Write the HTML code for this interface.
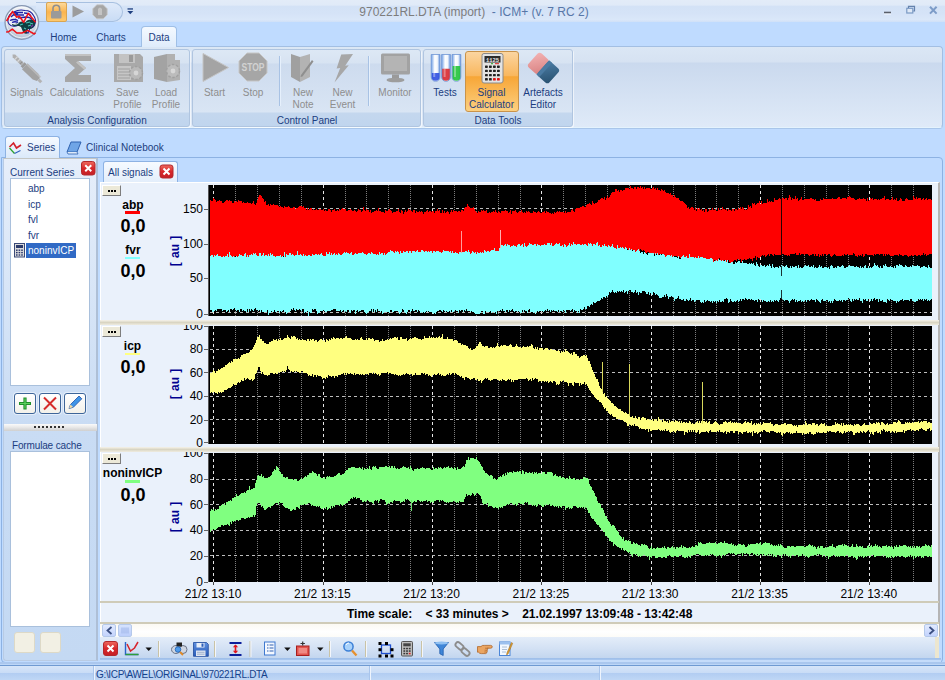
<!DOCTYPE html><html><head><meta charset="utf-8"><title>ICM+</title><style>
*{margin:0;padding:0;box-sizing:border-box}
html,body{width:945px;height:680px;overflow:hidden}
body{position:relative;background:#bfdbff;font-family:"Liberation Sans",sans-serif;font-size:11px;color:#000}
.abs{position:absolute}
.t{position:absolute;white-space:nowrap;line-height:1}
.c{transform:translateX(-50%);text-align:center}
.nav{color:#1b3d80}
.dis{color:#8e8e8e}
.ui{font-size:10px}
.grp{position:absolute;top:49px;height:78px;border:1px solid #b0c5e0;border-radius:3px;background:linear-gradient(#dde8f5 0,#d7e3f2 13px,#cddbee 14px,#d9e5f4 62px,#c4d7ee 63px,#c0d5ee 100%);box-shadow:1px 1px 0 rgba(255,255,255,.6)}
.lb{position:absolute;background:#fff;border:1px solid #a9c0dc}
.btn{position:absolute;border:1px solid #3d6599;border-radius:3px;background:linear-gradient(#ffffff,#f3f1ea);box-shadow:0 0 0 1px rgba(255,255,255,.5)}
.ax{font-size:12px;color:#000}
.sig{font-weight:bold;font-size:12px}
.val{font-weight:bold;font-size:18px}
.au{font-weight:bold;font-size:12px;word-spacing:0.9px;color:#000090;transform:translate(-50%,-50%) rotate(-90deg)}
</style></head><body>
<div class="abs" style="left:0;top:0;width:945px;height:22px;background:linear-gradient(#e3ecf8 0,#e0eaf8 24%,#d3e2f6 27%,#d5e3f7 60%,#dae7f9 90%,#cfe0f8 100%)"></div>
<div class="abs" style="left:0;top:22px;width:945px;height:25px;background:#bfdbff"></div>
<div class="t c " style="left:474px;top:6px;font-size:12px;color:#5877a8"><span style="color:#7d7d7d">970221RL.DTA (import)</span>&nbsp; - ICM+ (v. 7 RC 2)</div>
<div class="abs" style="left:36px;top:2px;width:87px;height:20px;border:1px solid #a7c0e0;border-left:none;border-radius:0 10px 10px 0;background:linear-gradient(#dfeafa,#c9dcf5)"></div>
<div class="abs" style="left:46px;top:2px;width:21px;height:20px;border:1px solid #dba54f;border-radius:2px;background:linear-gradient(#fdd99a,#fbb44e 50%,#fdc96e)"></div>
<div class="abs" style="left:141px;top:26px;width:36px;height:21px;border:1px solid #9fbfe6;border-bottom:none;border-radius:4px 4px 0 0;background:linear-gradient(#f4f9ff,#dfecfb)"></div>
<div class="t c nav ui" style="left:63.5px;top:32.5px;">Home</div>
<div class="t c nav ui" style="left:111px;top:32.5px;">Charts</div>
<div class="t c nav ui" style="left:159px;top:32.5px;">Data</div>
<div class="abs" style="left:1px;top:46px;width:942px;height:82px;border:1px solid #a3bfe3;border-bottom-color:#e4f3fd;border-radius:4px;background:linear-gradient(#dbe7f5 0,#d6e2f2 15px,#cad9ee 16px,#dfeaf8 100%);box-shadow:0 1px 0 #a9c6ea"></div>
<div class="abs" style="left:142px;top:46px;width:34px;height:1px;background:#dfecfb"></div>
<div class="grp" style="left:4px;width:186px"></div>
<div class="grp" style="left:192px;width:229px"></div>
<div class="grp" style="left:423px;width:150px"></div>
<div class="t c dis ui" style="left:26.5px;top:88px;">Signals</div>
<div class="t c dis ui" style="left:77px;top:88px;">Calculations</div>
<div class="t c dis ui" style="left:127.5px;top:88px;">Save</div>
<div class="t c dis ui" style="left:127.5px;top:100px;">Profile</div>
<div class="t c dis ui" style="left:166px;top:88px;">Load</div>
<div class="t c dis ui" style="left:166px;top:100px;">Profile</div>
<div class="t c dis ui" style="left:214.5px;top:88px;">Start</div>
<div class="t c dis ui" style="left:253px;top:88px;">Stop</div>
<div class="t c dis ui" style="left:303px;top:88px;">New</div>
<div class="t c dis ui" style="left:303px;top:100px;">Note</div>
<div class="t c dis ui" style="left:342.5px;top:88px;">New</div>
<div class="t c dis ui" style="left:342.5px;top:100px;">Event</div>
<div class="t c dis ui" style="left:395px;top:88px;">Monitor</div>
<div class="abs" style="left:465px;top:51px;width:54px;height:61px;border:1px solid #c9934a;border-radius:3px;background:linear-gradient(#fbd5a0 0,#f9b75e 40%,#f7a637 42%,#fcd080 100%)"></div>
<div class="t c nav ui" style="left:445px;top:88px;">Tests</div>
<div class="t c nav ui" style="left:491.5px;top:88px;">Signal</div>
<div class="t c nav ui" style="left:491.5px;top:100px;">Calculator</div>
<div class="t c nav ui" style="left:543px;top:88px;">Artefacts</div>
<div class="t c nav ui" style="left:543px;top:100px;">Editor</div>
<div class="t c nav ui" style="left:97px;top:116px;">Analysis Configuration</div>
<div class="t c nav ui" style="left:307px;top:116px;">Control Panel</div>
<div class="t c nav ui" style="left:498px;top:116px;">Data Tools</div>
<div class="abs" style="left:279px;top:56px;width:1px;height:50px;background:#a8c2e4"></div><div class="abs" style="left:280px;top:56px;width:1px;height:50px;background:#e6f0fc"></div>
<div class="abs" style="left:368px;top:56px;width:1px;height:50px;background:#a8c2e4"></div><div class="abs" style="left:369px;top:56px;width:1px;height:50px;background:#e6f0fc"></div>
<div class="abs" style="left:5px;top:136px;width:55px;height:22px;border:1px solid #8db2e3;border-bottom:none;border-radius:3px 3px 0 0;background:linear-gradient(#f6faff,#dbe9fa)"></div>
<div class="t nav ui" style="left:27px;top:143px;">Series</div>
<div class="t nav ui" style="left:86px;top:143px;">Clinical Notebook</div>
<div class="abs" style="left:1px;top:157px;width:942px;height:506px;border:1px solid #8db2e3;border-radius:0 4px 4px 4px;background:#bfdbff"></div>
<div class="abs" style="left:6px;top:157px;width:53px;height:1px;background:#dbe9fa"></div>
<div class="abs" style="left:3px;top:158px;width:95px;height:503px;border-radius:0 0 0 3px;border:1px solid #b9cbe3;border-top-color:#c4c6c4;border-right:2px solid #aebfd6;background:linear-gradient(#e6eefa 0,#c9dcf4 53%,#c4d9f3 100%)"></div>
<div class="t nav ui" style="left:10px;top:167.5px;">Current Series</div>
<div class="lb" style="left:10px;top:178px;width:80px;height:208px"></div>
<div class="t nav ui" style="left:28px;top:184px;">abp</div>
<div class="t nav ui" style="left:28px;top:200px;">icp</div>
<div class="t nav ui" style="left:28px;top:215px;">fvl</div>
<div class="t nav ui" style="left:28px;top:231px;">fvr</div>
<div class="abs" style="left:26px;top:243px;width:50px;height:15px;background:#316ac5"></div>
<div class="t ui" style="left:28px;top:246px;color:#fff">noninvICP</div>
<div class="btn" style="left:14px;top:393px;width:22px;height:21px"></div>
<div class="btn" style="left:39px;top:393px;width:22px;height:21px"></div>
<div class="btn" style="left:64px;top:393px;width:22px;height:21px"></div>
<div class="abs" style="left:4px;top:424px;width:93px;height:7px;background:linear-gradient(#fafafa,#e9e9e9 45%,#cfcfcf 100%)"></div>
<div class="abs" style="left:34px;top:426px;width:32px;height:2px;background:repeating-linear-gradient(90deg,#333 0,#333 2px,transparent 2px,transparent 4px)"></div>
<div class="t nav ui" style="left:12px;top:441px;letter-spacing:-0.15px">Formulae cache</div>
<div class="lb" style="left:10px;top:451px;width:80px;height:176px"></div>
<div class="abs" style="left:14px;top:632px;width:21px;height:21px;border:1px solid #ddd9c7;border-radius:3px;background:#f2f0e4"></div>
<div class="abs" style="left:40px;top:632px;width:21px;height:21px;border:1px solid #ddd9c7;border-radius:3px;background:#f2f0e4"></div>
<div class="abs" style="left:103px;top:161px;width:75px;height:21px;border:1px solid #8db2e3;border-bottom:none;border-radius:3px 3px 0 0;background:linear-gradient(#f6faff,#e3eefb)"></div>
<div class="t nav ui" style="left:108px;top:168px;">All signals</div>
<div class="abs" style="left:100px;top:182px;width:840px;height:455px;background:#eaf1fb;border:1px solid #fff;border-right:2px solid #b5b5b5"></div>
<div class="abs" style="left:100px;top:320px;width:839px;height:5px;background:linear-gradient(#f6f3ea,#d9d5c3 50%,#efece0)"></div>
<div class="abs" style="left:100px;top:447px;width:839px;height:5px;background:linear-gradient(#f6f3ea,#d9d5c3 50%,#efece0)"></div>
<div class="abs" style="left:100px;top:601px;width:839px;height:2px;background:#cfcbb8"></div>
<div class="abs" style="left:100px;top:622px;width:839px;height:2px;background:#cfcbb8"></div>
<div class="abs" style="left:100px;top:624px;width:839px;height:13px;background:linear-gradient(#fbf9f3,#ffffff 60%,#fdfcf8)"></div>
<div class="abs" style="left:100px;top:637px;width:840px;height:24px;background:#bfdbff"></div><div class="abs" style="left:100px;top:637px;width:835px;height:21px;background:linear-gradient(#e4edf9,#d3e1f4 55%,#c3d6ef)"></div><div class="abs" style="left:935px;top:637px;width:4px;height:21px;background:#ece6cf"></div>
<div class="abs" style="left:102px;top:185px;width:19px;height:11px;background:#ece9d8;border:1px solid #fff;border-right-color:#7d7d7d;border-bottom-color:#7d7d7d"></div>
<div class="abs" style="left:108px;top:190px;width:8px;height:2px;background:repeating-linear-gradient(90deg,#000 0,#000 2px,transparent 2px,transparent 3px)"></div>
<div class="abs" style="left:102px;top:326px;width:19px;height:11px;background:#ece9d8;border:1px solid #fff;border-right-color:#7d7d7d;border-bottom-color:#7d7d7d"></div>
<div class="abs" style="left:108px;top:331px;width:8px;height:2px;background:repeating-linear-gradient(90deg,#000 0,#000 2px,transparent 2px,transparent 3px)"></div>
<div class="abs" style="left:102px;top:453px;width:19px;height:11px;background:#ece9d8;border:1px solid #fff;border-right-color:#7d7d7d;border-bottom-color:#7d7d7d"></div>
<div class="abs" style="left:108px;top:458px;width:8px;height:2px;background:repeating-linear-gradient(90deg,#000 0,#000 2px,transparent 2px,transparent 3px)"></div>
<div class="t c sig" style="left:133px;top:198.8px;">abp</div>
<div class="abs" style="left:124.5px;top:211.3px;width:15.5px;height:2.5px;background:#f00"></div>
<div class="t c val" style="left:133px;top:216.7px;">0,0</div>
<div class="t c sig" style="left:133px;top:243.8px;">fvr</div>
<div class="abs" style="left:124.5px;top:256.8px;width:15.5px;height:2.5px;background:#80ffff"></div>
<div class="t c val" style="left:133px;top:261.6px;">0,0</div>
<div class="t c sig" style="left:132.5px;top:340.4px;">icp</div>
<div class="abs" style="left:124.5px;top:352.8px;width:15.5px;height:2.5px;background:#ffff80"></div>
<div class="t c val" style="left:133px;top:358px;">0,0</div>
<div class="t c " style="left:132.5px;top:466.7px;font-weight:bold;font-size:12px">noninvICP</div>
<div class="abs" style="left:124.5px;top:480px;width:15.5px;height:2.5px;background:#80ff80"></div>
<div class="t c val" style="left:133px;top:486px;">0,0</div>
<div class="t au" style="left:174.5px;top:250.5px">[ au ]</div>
<div class="t au" style="left:174.5px;top:384px">[ au ]</div>
<div class="t au" style="left:174.5px;top:517px">[ au ]</div>
<div class="t ax" style="right:742px;top:203px">150</div><div class="abs" style="left:204px;top:209px;width:4px;height:1px;background:#666"></div>
<div class="t ax" style="right:742px;top:237.5px">100</div><div class="abs" style="left:204px;top:244px;width:4px;height:1px;background:#666"></div>
<div class="t ax" style="right:742px;top:272px">50</div><div class="abs" style="left:204px;top:278px;width:4px;height:1px;background:#666"></div>
<div class="t ax" style="right:742px;top:307.5px">0</div><div class="abs" style="left:204px;top:314px;width:4px;height:1px;background:#666"></div>
<div class="abs" style="left:150px;top:325px;width:58px;height:12px;overflow:hidden"><div class="t ax" style="right:5px;top:-5.5px">100</div></div><div class="abs" style="left:204px;top:326px;width:4px;height:1px;background:#666"></div>
<div class="t ax" style="right:742px;top:343px">80</div><div class="abs" style="left:204px;top:349px;width:4px;height:1px;background:#666"></div>
<div class="t ax" style="right:742px;top:366.5px">60</div><div class="abs" style="left:204px;top:372px;width:4px;height:1px;background:#666"></div>
<div class="t ax" style="right:742px;top:390px">40</div><div class="abs" style="left:204px;top:396px;width:4px;height:1px;background:#666"></div>
<div class="t ax" style="right:742px;top:414px">20</div><div class="abs" style="left:204px;top:420px;width:4px;height:1px;background:#666"></div>
<div class="t ax" style="right:742px;top:436.5px">0</div><div class="abs" style="left:204px;top:442px;width:4px;height:1px;background:#666"></div>
<div class="abs" style="left:150px;top:452px;width:58px;height:12px;overflow:hidden"><div class="t ax" style="right:5px;top:-5px">100</div></div><div class="abs" style="left:204px;top:453px;width:4px;height:1px;background:#666"></div>
<div class="t ax" style="right:742px;top:473px">80</div><div class="abs" style="left:204px;top:479px;width:4px;height:1px;background:#666"></div>
<div class="t ax" style="right:742px;top:498.5px">60</div><div class="abs" style="left:204px;top:504px;width:4px;height:1px;background:#666"></div>
<div class="t ax" style="right:742px;top:524px">40</div><div class="abs" style="left:204px;top:530px;width:4px;height:1px;background:#666"></div>
<div class="t ax" style="right:742px;top:549.5px">20</div><div class="abs" style="left:204px;top:556px;width:4px;height:1px;background:#666"></div>
<div class="t ax" style="right:742px;top:575.5px">0</div><div class="abs" style="left:204px;top:582px;width:4px;height:1px;background:#666"></div>
<div class="t c ax" style="left:213.0px;top:588px;">21/2 13:10</div>
<div class="abs" style="left:213px;top:582px;width:1px;height:3px;background:#444"></div>
<div class="t c ax" style="left:322.3px;top:588px;">21/2 13:15</div>
<div class="abs" style="left:323px;top:582px;width:1px;height:3px;background:#444"></div>
<div class="t c ax" style="left:431.6px;top:588px;">21/2 13:20</div>
<div class="abs" style="left:432px;top:582px;width:1px;height:3px;background:#444"></div>
<div class="t c ax" style="left:540.9px;top:588px;">21/2 13:25</div>
<div class="abs" style="left:541px;top:582px;width:1px;height:3px;background:#444"></div>
<div class="t c ax" style="left:650.2px;top:588px;">21/2 13:30</div>
<div class="abs" style="left:651px;top:582px;width:1px;height:3px;background:#444"></div>
<div class="t c ax" style="left:759.5px;top:588px;">21/2 13:35</div>
<div class="abs" style="left:760px;top:582px;width:1px;height:3px;background:#444"></div>
<div class="t c ax" style="left:868.8px;top:588px;">21/2 13:40</div>
<div class="abs" style="left:869px;top:582px;width:1px;height:3px;background:#444"></div>
<div class="t " style="left:347px;top:607.5px;font-weight:bold;font-size:12px">Time scale:&nbsp;&nbsp;&nbsp; &lt; 33 minutes &gt;&nbsp;&nbsp;&nbsp; 21.02.1997 13:09:48 - 13:42:48</div>
<div class="abs" style="left:102px;top:624px;width:14px;height:13px;border:1px solid #b5c9ea;border-radius:2px;background:linear-gradient(#e1eafe,#c3d3fd)"></div>
<div class="abs" style="left:118px;top:624px;width:14px;height:13px;border:1px solid #b5c9ea;border-radius:2px;background:linear-gradient(#d6e3fe,#bccefb)"></div>
<div class="abs" style="left:924px;top:624px;width:14px;height:13px;border:1px solid #b5c9ea;border-radius:2px;background:linear-gradient(#e1eafe,#c3d3fd)"></div>
<div class="abs" style="left:100px;top:658px;width:841px;height:2px;background:linear-gradient(#9dbde8,#a9c8f0)"></div>
<div class="abs" style="left:100px;top:660px;width:841px;height:2px;background:#c5dcfa"></div>
<div class="abs" style="left:0;top:662px;width:945px;height:2px;background:#aac7ee"></div>
<div class="abs" style="left:0;top:664px;width:945px;height:1px;background:#bcd6f7"></div>
<div class="abs" style="left:0;top:665px;width:945px;height:1px;background:#6f9ad2"></div>
<div class="abs" style="left:0;top:666px;width:945px;height:14px;background:linear-gradient(#d6e5f9 0,#c9dcf6 48%,#b2cdf2 52%,#bfd7f5 100%)"></div>
<div class="t ui" style="left:96px;top:670px;color:#15428b;font-size:10px;letter-spacing:-0.33px">G:\ICP\AWEL\ORIGINAL\970221RL.DTA</div>
<div class="abs" style="left:94px;top:666px;width:1px;height:14px;background:#eef4fd"></div><div class="abs" style="left:93px;top:666px;width:1px;height:14px;background:#a9c5ec"></div>
<div class="abs" style="left:370px;top:666px;width:1px;height:14px;background:#eef4fd"></div><div class="abs" style="left:369px;top:666px;width:1px;height:14px;background:#a9c5ec"></div>
<div class="abs" style="left:600px;top:666px;width:1px;height:14px;background:#eef4fd"></div><div class="abs" style="left:599px;top:666px;width:1px;height:14px;background:#a9c5ec"></div>
<svg class="abs" style="left:0;top:0" width="945" height="680" viewBox="0 0 945 680" shape-rendering="crispEdges">
<rect x="208" y="185" width="724" height="131" fill="#000"/>
<path d="M213.5,185V316" stroke="#e6e6e6" stroke-width="1" stroke-dasharray="3,3"/>
<path d="M235.5,185V316" stroke="#7c7c7c" stroke-width="1" stroke-dasharray="1,1"/>
<path d="M257.5,185V316" stroke="#7c7c7c" stroke-width="1" stroke-dasharray="1,1"/>
<path d="M279.5,185V316" stroke="#7c7c7c" stroke-width="1" stroke-dasharray="1,1"/>
<path d="M301.5,185V316" stroke="#7c7c7c" stroke-width="1" stroke-dasharray="1,1"/>
<path d="M323.5,185V316" stroke="#e6e6e6" stroke-width="1" stroke-dasharray="3,3"/>
<path d="M345.5,185V316" stroke="#7c7c7c" stroke-width="1" stroke-dasharray="1,1"/>
<path d="M366.5,185V316" stroke="#7c7c7c" stroke-width="1" stroke-dasharray="1,1"/>
<path d="M388.5,185V316" stroke="#7c7c7c" stroke-width="1" stroke-dasharray="1,1"/>
<path d="M410.5,185V316" stroke="#7c7c7c" stroke-width="1" stroke-dasharray="1,1"/>
<path d="M432.5,185V316" stroke="#e6e6e6" stroke-width="1" stroke-dasharray="3,3"/>
<path d="M454.5,185V316" stroke="#7c7c7c" stroke-width="1" stroke-dasharray="1,1"/>
<path d="M476.5,185V316" stroke="#7c7c7c" stroke-width="1" stroke-dasharray="1,1"/>
<path d="M498.5,185V316" stroke="#7c7c7c" stroke-width="1" stroke-dasharray="1,1"/>
<path d="M520.5,185V316" stroke="#7c7c7c" stroke-width="1" stroke-dasharray="1,1"/>
<path d="M541.5,185V316" stroke="#e6e6e6" stroke-width="1" stroke-dasharray="3,3"/>
<path d="M563.5,185V316" stroke="#7c7c7c" stroke-width="1" stroke-dasharray="1,1"/>
<path d="M585.5,185V316" stroke="#7c7c7c" stroke-width="1" stroke-dasharray="1,1"/>
<path d="M607.5,185V316" stroke="#7c7c7c" stroke-width="1" stroke-dasharray="1,1"/>
<path d="M629.5,185V316" stroke="#7c7c7c" stroke-width="1" stroke-dasharray="1,1"/>
<path d="M651.5,185V316" stroke="#e6e6e6" stroke-width="1" stroke-dasharray="3,3"/>
<path d="M673.5,185V316" stroke="#7c7c7c" stroke-width="1" stroke-dasharray="1,1"/>
<path d="M695.5,185V316" stroke="#7c7c7c" stroke-width="1" stroke-dasharray="1,1"/>
<path d="M716.5,185V316" stroke="#7c7c7c" stroke-width="1" stroke-dasharray="1,1"/>
<path d="M738.5,185V316" stroke="#7c7c7c" stroke-width="1" stroke-dasharray="1,1"/>
<path d="M760.5,185V316" stroke="#e6e6e6" stroke-width="1" stroke-dasharray="3,3"/>
<path d="M782.5,185V316" stroke="#7c7c7c" stroke-width="1" stroke-dasharray="1,1"/>
<path d="M804.5,185V316" stroke="#7c7c7c" stroke-width="1" stroke-dasharray="1,1"/>
<path d="M826.5,185V316" stroke="#7c7c7c" stroke-width="1" stroke-dasharray="1,1"/>
<path d="M848.5,185V316" stroke="#7c7c7c" stroke-width="1" stroke-dasharray="1,1"/>
<path d="M869.5,185V316" stroke="#e6e6e6" stroke-width="1" stroke-dasharray="3,3"/>
<path d="M891.5,185V316" stroke="#7c7c7c" stroke-width="1" stroke-dasharray="1,1"/>
<path d="M913.5,185V316" stroke="#7c7c7c" stroke-width="1" stroke-dasharray="1,1"/>
<path d="M210,208.5H932" stroke="#bdbdbd" stroke-width="1" stroke-dasharray="3,3"/>
<path d="M210,243.5H932" stroke="#bdbdbd" stroke-width="1" stroke-dasharray="3,3"/>
<path d="M210,278.5H932" stroke="#bdbdbd" stroke-width="1" stroke-dasharray="3,3"/>
<path d="M210,312.5H932" stroke="#bdbdbd" stroke-width="1" stroke-dasharray="3,3"/>
<path d="M210,200H211V201H212V201H213V198H214V199H215V200H216V202H217V201H218V201H219V200H220V201H221V201H222V203H223V203H224V202H225V201H226V200H227V200H228V201H229V200H230V201H231V201H232V203H233V203H234V201H235V202H236V201H237V202H238V200H239V201H240V201H241V201H242V203H243V202H244V203H245V203H246V203H247V202H248V203H249V203H250V203H251V204H252V203H253V201H254V204H255V205H256V203H257V200H258V197H259V195H260V195H261V196H262V198H263V199H264V202H265V201H266V205H267V205H268V204H269V206H270V204H271V205H272V205H273V204H274V205H275V205H276V205H277V205H278V206H279V207H280V206H281V207H282V207H283V208H284V206H285V207H286V207H287V207H288V206H289V207H290V208H291V208H292V208H293V207H294V207H295V209H296V208H297V208H298V207H299V206H300V206H301V206H302V207H303V206H304V208H305V208H306V210H307V208H308V210H309V209H310V208H311V208H312V210H313V209H314V210H315V210H316V209H317V210H318V210H319V209H320V209H321V210H322V210H323V209H324V211H325V210H326V211H327V211H328V209H329V209H330V210H331V212H332V210H333V210H334V209H335V211H336V211H337V210H338V211H339V209H340V210H341V209H342V208H343V209H344V209H345V209H346V211H347V211H348V210H349V210H350V209H351V210H352V211H353V211H354V210H355V211H356V212H357V211H358V209H359V210H360V210H361V212H362V211H363V207H364V210H365V211H366V209H367V210H368V210H369V212H370V210H371V213H372V212H373V212H374V211H375V211H376V210H377V211H378V208H379V211H380V211H381V212H382V212H383V212H384V213H385V210H386V211H387V211H388V210H389V209H390V210H391V211H392V213H393V212H394V212H395V212H396V211H397V211H398V209H399V212H400V213H401V210H402V211H403V214H404V212H405V210H406V212H407V211H408V209H409V210H410V210H411V211H412V212H413V210H414V210H415V213H416V211H417V212H418V212H419V211H420V212H421V211H422V212H423V214H424V212H425V212H426V211H427V210H428V212H429V211H430V211H431V212H432V211H433V211H434V213H435V211H436V211H437V209H438V211H439V210H440V213H441V213H442V210H443V213H444V211H445V213H446V212H447V211H448V212H449V214H450V212H451V210H452V212H453V210H454V211H455V211H456V211H457V212H458V211H459V211H460V212H461V210H462V210H463V211H464V208H465V207H466V207H467V204H468V206H469V207H470V208H471V208H472V208H473V207H474V209H475V211H476V212H477V213H478V211H479V212H480V212H481V210H482V211H483V210H484V211H485V211H486V210H487V213H488V213H489V212H490V213H491V212H492V212H493V211H494V212H495V210H496V212H497V213H498V211H499V212H500V213H501V211H502V211H503V211H504V211H505V210H506V211H507V211H508V213H509V212H510V210H511V214H512V211H513V211H514V211H515V210H516V212H517V213H518V212H519V211H520V212H521V210H522V212H523V213H524V212H525V213H526V211H527V212H528V211H529V212H530V213H531V213H532V213H533V211H534V212H535V212H536V213H537V212H538V211H539V212H540V213H541V213H542V212H543V212H544V211H545V213H546V211H547V212H548V212H549V213H550V213H551V214H552V213H553V214H554V212H555V213H556V212H557V211H558V212H559V211H560V212H561V212H562V212H563V212H564V213H565V211H566V213H567V212H568V212H569V212H570V212H571V210H572V209H573V211H574V212H575V209H576V208H577V208H578V208H579V208H580V207H581V207H582V206H583V206H584V207H585V207H586V205H587V204H588V204H589V203H590V204H591V205H592V201H593V203H594V204H595V203H596V203H597V202H598V200H599V200H600V199H601V198H602V198H603V199H604V197H605V200H606V198H607V196H608V198H609V197H610V195H611V193H612V192H613V192H614V192H615V189H616V189H617V191H618V190H619V192H620V190H621V190H622V191H623V190H624V190H625V188H626V188H627V188H628V188H629V189H630V186H631V188H632V188H633V189H634V187H635V187H636V189H637V187H638V187H639V188H640V186H641V188H642V187H643V189H644V187H645V189H646V188H647V188H648V188H649V188H650V189H651V189H652V188H653V187H654V189H655V188H656V190H657V188H658V190H659V190H660V191H661V189H662V190H663V191H664V190H665V192H666V193H667V193H668V193H669V194H670V193H671V195H672V195H673V197H674V195H675V197H676V198H677V198H678V198H679V200H680V201H681V201H682V201H683V202H684V203H685V204H686V205H687V208H688V207H689V209H690V208H691V207H692V207H693V208H694V210H695V208H696V211H697V208H698V209H699V208H700V210H701V209H702V211H703V210H704V212H705V209H706V209H707V212H708V211H709V209H710V210H711V210H712V208H713V210H714V210H715V209H716V211H717V211H718V208H719V210H720V209H721V210H722V207H723V209H724V209H725V210H726V209H727V211H728V209H729V210H730V210H731V211H732V209H733V209H734V211H735V209H736V209H737V210H738V208H739V209H740V207H741V209H742V207H743V208H744V210H745V209H746V210H747V209H748V205H749V207H750V206H751V208H752V203H753V204H754V203H755V205H756V204H757V203H758V203H759V201H760V204H761V201H762V204H763V203H764V203H765V203H766V203H767V199H768V202H769V201H770V202H771V201H772V202H773V202H774V198H775V200H776V200H777V200H778V199H779V198H780V199H781V198H782V198H783V198H784V199H785V198H786V198H787V200H788V198H789V195H790V197H791V200H792V198H793V199H794V199H795V196H796V199H797V198H798V201H799V200H800V199H801V197H802V200H803V200H804V199H805V199H806V199H807V199H808V199H809V199H810V198H811V198H812V199H813V199H814V200H815V199H816V201H817V201H818V201H819V201H820V199H821V200H822V200H823V198H824V199H825V199H826V199H827V199H828V199H829V199H830V199H831V199H832V198H833V199H834V199H835V199H836V199H837V198H838V197H839V197H840V199H841V199H842V198H843V198H844V198H845V198H846V199H847V197H848V197H849V196H850V197H851V198H852V198H853V198H854V199H855V200H856V200H857V199H858V199H859V198H860V199H861V199H862V199H863V198H864V199H865V199H866V201H867V198H868V201H869V200H870V198H871V199H872V198H873V200H874V199H875V199H876V199H877V200H878V199H879V200H880V199H881V199H882V198H883V198H884V196H885V200H886V199H887V199H888V199H889V200H890V200H891V199H892V197H893V200H894V199H895V200H896V198H897V201H898V201H899V200H900V198H901V199H902V201H903V201H904V201H905V199H906V198H907V199H908V200H909V200H910V200H911V200H912V200H913V196H914V198H915V199H916V197H917V199H918V198H919V198H920V198H921V200H922V199H923V198H924V200H925V199H926V198H927V200H928V199H929V199H930V199H931V200H932V254V254H931V254H930V254H929V255H928V255H927V256H926V254H925V255H924V253H923V255H922V255H921V256H920V255H919V255H918V256H917V256H916V255H915V255H914V256H913V256H912V255H911V256H910V256H909V257H908V256H907V255H906V255H905V255H904V256H903V256H902V255H901V255H900V254H899V256H898V255H897V255H896V255H895V255H894V256H893V256H892V256H891V256H890V255H889V254H888V255H887V254H886V256H885V254H884V256H883V254H882V254H881V254H880V255H879V254H878V254H877V254H876V255H875V254H874V256H873V255H872V255H871V255H870V255H869V255H868V255H867V254H866V254H865V256H864V257H863V254H862V256H861V255H860V256H859V255H858V257H857V256H856V256H855V254H854V253H853V255H852V255H851V255H850V255H849V255H848V254H847V255H846V255H845V254H844V256H843V255H842V256H841V256H840V256H839V256H838V256H837V256H836V255H835V254H834V255H833V256H832V257H831V256H830V254H829V254H828V255H827V255H826V254H825V254H824V256H823V254H822V256H821V255H820V257H819V254H818V256H817V256H816V254H815V256H814V254H813V254H812V255H811V255H810V256H809V255H808V254H807V254H806V254H805V255H804V254H803V254H802V254H801V255H800V253H799V255H798V255H797V255H796V253H795V254H794V254H793V254H792V254H791V254H790V256H789V255H788V256H787V255H786V255H785V255H784V254H783V254H782V255H781V255H780V255H779V255H778V255H777V255H776V255H775V254H774V256H773V255H772V254H771V254H770V256H769V254H768V255H767V256H766V257H765V255H764V256H763V255H762V256H761V257H760V258H759V258H758V257H757V260H756V256H755V258H754V258H753V261H752V259H751V259H750V258H749V259H748V259H747V260H746V260H745V259H744V260H743V260H742V262H741V259H740V260H739V259H738V259H737V261H736V260H735V260H734V261H733V262H732V263H731V264H730V262H729V260H728V262H727V262H726V261H725V260H724V262H723V260H722V261H721V260H720V258H719V260H718V261H717V260H716V263H715V260H714V262H713V259H712V258H711V259H710V260H709V260H708V260H707V260H706V260H705V260H704V259H703V259H702V259H701V259H700V259H699V259H698V261H697V258H696V259H695V259H694V261H693V259H692V257H691V259H690V257H689V258H688V259H687V256H686V257H685V257H684V260H683V259H682V257H681V258H680V257H679V257H678V257H677V256H676V256H675V256H674V257H673V258H672V257H671V259H670V257H669V257H668V257H667V258H666V257H665V257H664V255H663V254H662V254H661V255H660V254H659V257H658V255H657V254H656V254H655V254H654V254H653V256H652V254H651V255H650V253H649V252H648V252H647V253H646V253H645V251H644V250H643V251H642V250H641V249H640V252H639V252H638V253H637V253H636V253H635V250H634V250H633V250H632V249H631V252H630V249H629V252H628V249H627V249H626V251H625V250H624V249H623V249H622V250H621V249H620V250H619V250H618V249H617V250H616V251H615V249H614V250H613V249H612V251H611V252H610V250H609V250H608V251H607V251H606V251H605V251H604V251H603V251H602V250H601V251H600V252H599V250H598V254H597V251H596V251H595V251H594V249H593V250H592V252H591V253H590V253H589V253H588V252H587V255H586V253H585V251H584V253H583V254H582V254H581V253H580V252H579V252H578V253H577V251H576V252H575V253H574V254H573V253H572V253H571V255H570V255H569V253H568V254H567V253H566V254H565V253H564V255H563V255H562V254H561V255H560V256H559V256H558V256H557V256H556V255H555V257H554V255H553V256H552V257H551V255H550V255H549V254H548V257H547V258H546V256H545V255H544V256H543V257H542V255H541V259H540V257H539V257H538V257H537V257H536V256H535V255H534V257H533V255H532V256H531V256H530V255H529V255H528V256H527V256H526V257H525V256H524V257H523V256H522V256H521V257H520V256H519V256H518V256H517V255H516V256H515V254H514V254H513V255H512V256H511V257H510V257H509V259H508V257H507V255H506V257H505V257H504V255H503V257H502V256H501V257H500V255H499V256H498V255H497V255H496V257H495V256H494V253H493V255H492V255H491V255H490V255H489V255H488V256H487V255H486V255H485V254H484V254H483V254H482V255H481V256H480V256H479V256H478V255H477V256H476V254H475V254H474V255H473V256H472V255H471V255H470V256H469V255H468V255H467V258H466V256H465V255H464V255H463V254H462V256H461V256H460V255H459V257H458V258H457V257H456V257H455V257H454V257H453V256H452V256H451V256H450V256H449V256H448V256H447V256H446V257H445V258H444V258H443V258H442V257H441V256H440V256H439V258H438V257H437V257H436V258H435V258H434V258H433V257H432V256H431V257H430V257H429V256H428V256H427V257H426V255H425V257H424V257H423V258H422V258H421V259H420V259H419V257H418V256H417V256H416V257H415V257H414V255H413V255H412V257H411V259H410V256H409V257H408V256H407V257H406V256H405V257H404V258H403V259H402V258H401V257H400V257H399V257H398V257H397V257H396V258H395V257H394V256H393V256H392V258H391V256H390V257H389V258H388V256H387V257H386V256H385V257H384V258H383V257H382V258H381V256H380V258H379V257H378V257H377V257H376V255H375V256H374V256H373V257H372V257H371V258H370V258H369V259H368V258H367V256H366V257H365V257H364V257H363V258H362V257H361V256H360V256H359V256H358V258H357V256H356V257H355V257H354V256H353V258H352V256H351V260H350V257H349V259H348V258H347V257H346V257H345V257H344V258H343V257H342V257H341V257H340V258H339V255H338V258H337V259H336V257H335V259H334V257H333V257H332V256H331V257H330V258H329V258H328V257H327V256H326V256H325V258H324V257H323V257H322V257H321V258H320V256H319V257H318V257H317V256H316V258H315V258H314V258H313V259H312V257H311V256H310V257H309V258H308V258H307V259H306V257H305V256H304V257H303V259H302V257H301V257H300V257H299V259H298V256H297V257H296V256H295V257H294V257H293V257H292V259H291V260H290V259H289V262H288V259H287V258H286V257H285V256H284V256H283V258H282V257H281V258H280V259H279V258H278V259H277V258H276V257H275V259H274V258H273V257H272V259H271V258H270V257H269V257H268V258H267V256H266V258H265V259H264V259H263V259H262V258H261V258H260V256H259V258H258V257H257V259H256V258H255V258H254V259H253V258H252V259H251V258H250V260H249V259H248V260H247V259H246V259H245V258H244V258H243V259H242V260H241V258H240V257H239V257H238V258H237V257H236V256H235V258H234V259H233V259H232V262H231V259H230V259H229V260H228V260H227V260H226V260H225V258H224V257H223V258H222V257H221V256H220V256H219V257H218V258H217V257H216V257H215V257H214V258H213V257H212V258H211V260H210Z" fill="#fe0000"/>
<path d="M210,256H211V255H212V255H213V257H214V255H215V256H216V255H217V254H218V256H219V256H220V256H221V257H222V257H223V256H224V257H225V256H226V256H227V254H228V257H229V252H230V255H231V256H232V257H233V256H234V257H235V257H236V256H237V257H238V256H239V254H240V255H241V255H242V256H243V256H244V254H245V253H246V257H247V255H248V257H249V255H250V255H251V254H252V255H253V253H254V254H255V253H256V255H257V256H258V256H259V253H260V253H261V256H262V255H263V253H264V256H265V255H266V255H267V256H268V254H269V256H270V253H271V255H272V254H273V256H274V256H275V257H276V256H277V256H278V256H279V256H280V255H281V257H282V256H283V257H284V252H285V257H286V254H287V255H288V255H289V253H290V253H291V255H292V254H293V255H294V256H295V255H296V255H297V251H298V255H299V255H300V254H301V255H302V256H303V254H304V256H305V255H306V256H307V256H308V255H309V255H310V256H311V256H312V254H313V255H314V255H315V254H316V254H317V255H318V254H319V255H320V254H321V253H322V255H323V256H324V256H325V256H326V252H327V254H328V254H329V252H330V255H331V253H332V255H333V254H334V253H335V255H336V254H337V255H338V253H339V254H340V255H341V255H342V254H343V253H344V252H345V253H346V252H347V253H348V253H349V254H350V253H351V252H352V255H353V255H354V254H355V253H356V254H357V254H358V253H359V253H360V253H361V253H362V252H363V253H364V254H365V254H366V255H367V254H368V253H369V253H370V254H371V252H372V253H373V254H374V254H375V254H376V255H377V254H378V255H379V252H380V254H381V253H382V253H383V255H384V253H385V255H386V254H387V253H388V252H389V252H390V250H391V251H392V251H393V252H394V253H395V251H396V252H397V251H398V252H399V254H400V251H401V253H402V253H403V251H404V252H405V252H406V251H407V251H408V253H409V251H410V251H411V253H412V251H413V251H414V251H415V252H416V251H417V250H418V252H419V252H420V252H421V250H422V250H423V251H424V252H425V251H426V251H427V252H428V251H429V252H430V251H431V251H432V253H433V251H434V251H435V252H436V251H437V251H438V251H439V252H440V252H441V253H442V252H443V250H444V251H445V251H446V251H447V251H448V251H449V252H450V251H451V253H452V251H453V253H454V253H455V252H456V253H457V253H458V254H459V252H460V252H461V251H462V252H463V252H464V252H465V251H466V251H467V252H468V250H469V252H470V254H471V253H472V251H473V252H474V253H475V252H476V254H477V252H478V253H479V253H480V252H481V253H482V252H483V253H484V250H485V251H486V252H487V251H488V251H489V252H490V251H491V250H492V250H493V250H494V248H495V251H496V251H497V251H498V251H499V248H500V247H501V245H502V245H503V246H504V245H505V244H506V246H507V244H508V245H509V245H510V247H511V246H512V246H513V245H514V246H515V246H516V247H517V245H518V244H519V244H520V246H521V245H522V244H523V247H524V243H525V246H526V247H527V246H528V245H529V243H530V244H531V244H532V245H533V245H534V244H535V244H536V246H537V244H538V245H539V245H540V246H541V245H542V245H543V245H544V244H545V245H546V245H547V243H548V243H549V243H550V245H551V243H552V246H553V246H554V245H555V244H556V243H557V244H558V244H559V243H560V246H561V246H562V245H563V247H564V244H565V245H566V247H567V246H568V245H569V243H570V246H571V244H572V245H573V242H574V244H575V244H576V245H577V244H578V244H579V244H580V245H581V245H582V244H583V245H584V244H585V244H586V245H587V246H588V243H589V244H590V243H591V244H592V246H593V244H594V244H595V245H596V243H597V242H598V246H599V245H600V247H601V247H602V245H603V246H604V244H605V246H606V246H607V247H608V245H609V246H610V247H611V246H612V244H613V247H614V248H615V248H616V249H617V245H618V248H619V248H620V247H621V248H622V247H623V248H624V249H625V247H626V248H627V250H628V250H629V248H630V250H631V249H632V251H633V250H634V250H635V252H636V251H637V250H638V249H639V251H640V253H641V252H642V252H643V254H644V252H645V253H646V254H647V255H648V253H649V253H650V253H651V253H652V253H653V253H654V256H655V253H656V255H657V253H658V255H659V255H660V254H661V255H662V254H663V254H664V255H665V257H666V256H667V255H668V255H669V255H670V256H671V255H672V257H673V256H674V257H675V257H676V257H677V258H678V256H679V259H680V259H681V257H682V256H683V255H684V257H685V257H686V256H687V258H688V258H689V254H690V257H691V257H692V257H693V257H694V258H695V257H696V258H697V258H698V256H699V258H700V257H701V257H702V257H703V258H704V258H705V258H706V259H707V259H708V259H709V259H710V258H711V258H712V259H713V262H714V261H715V261H716V260H717V261H718V259H719V260H720V260H721V261H722V260H723V261H724V261H725V260H726V262H727V260H728V263H729V263H730V263H731V262H732V262H733V264H734V264H735V262H736V263H737V262H738V261H739V261H740V263H741V263H742V261H743V263H744V263H745V263H746V263H747V264H748V264H749V263H750V264H751V263H752V264H753V263H754V265H755V266H756V262H757V264H758V266H759V267H760V265H761V265H762V266H763V266H764V265H765V267H766V266H767V265H768V266H769V264H770V266H771V268H772V264H773V267H774V268H775V267H776V267H777V267H778V268H779V266H780V267H781V265H782V266H783V266H784V267H785V266H786V265H787V267H788V268H789V268H790V266H791V268H792V266H793V267H794V267H795V266H796V266H797V268H798V265H799V268H800V267H801V268H802V268H803V267H804V266H805V265H806V266H807V266H808V265H809V267H810V267H811V266H812V267H813V265H814V268H815V267H816V268H817V268H818V267H819V265H820V267H821V266H822V268H823V268H824V267H825V267H826V267H827V268H828V267H829V269H830V266H831V265H832V266H833V268H834V268H835V267H836V268H837V266H838V266H839V267H840V267H841V266H842V265H843V266H844V268H845V268H846V267H847V267H848V266H849V265H850V266H851V266H852V266H853V266H854V267H855V267H856V266H857V267H858V267H859V268H860V266H861V268H862V267H863V268H864V266H865V265H866V268H867V268H868V266H869V268H870V267H871V268H872V267H873V266H874V263H875V265H876V266H877V265H878V267H879V268H880V266H881V268H882V268H883V265H884V266H885V264H886V266H887V267H888V267H889V267H890V266H891V267H892V267H893V268H894V266H895V268H896V265H897V265H898V266H899V264H900V265H901V265H902V266H903V267H904V267H905V265H906V266H907V267H908V267H909V267H910V266H911V267H912V265H913V266H914V266H915V266H916V266H917V265H918V266H919V266H920V268H921V267H922V267H923V266H924V266H925V267H926V267H927V268H928V265H929V267H930V268H931V268H932V299V299H931V300H930V301H929V300H928V301H927V299H926V300H925V299H924V301H923V299H922V300H921V299H920V300H919V299H918V301H917V301H916V302H915V302H914V301H913V301H912V299H911V299H910V301H909V300H908V300H907V300H906V300H905V300H904V301H903V299H902V300H901V300H900V301H899V302H898V301H897V303H896V301H895V301H894V301H893V300H892V300H891V299H890V301H889V300H888V299H887V303H886V302H885V302H884V302H883V300H882V301H881V301H880V299H879V302H878V299H877V299H876V300H875V298H874V299H873V301H872V299H871V301H870V299H869V299H868V301H867V301H866V299H865V300H864V299H863V303H862V301H861V301H860V298H859V300H858V300H857V299H856V300H855V299H854V301H853V299H852V302H851V301H850V299H849V298H848V300H847V300H846V301H845V300H844V300H843V302H842V300H841V301H840V300H839V301H838V301H837V301H836V300H835V299H834V301H833V303H832V301H831V303H830V301H829V302H828V300H827V300H826V301H825V301H824V301H823V299H822V300H821V303H820V302H819V301H818V300H817V299H816V302H815V300H814V300H813V300H812V299H811V300H810V301H809V300H808V300H807V302H806V300H805V301H804V302H803V301H802V302H801V300H800V301H799V301H798V302H797V300H796V302H795V299H794V300H793V299H792V300H791V301H790V303H789V301H788V300H787V300H786V300H785V301H784V300H783V299H782V299H781V298H780V300H779V302H778V301H777V300H776V301H775V300H774V302H773V301H772V302H771V300H770V302H769V301H768V302H767V302H766V301H765V301H764V300H763V302H762V300H761V299H760V300H759V299H758V302H757V300H756V300H755V301H754V300H753V300H752V299H751V300H750V299H749V299H748V300H747V299H746V298H745V300H744V299H743V299H742V301H741V299H740V301H739V302H738V300H737V301H736V302H735V301H734V302H733V302H732V301H731V299H730V302H729V303H728V299H727V298H726V299H725V299H724V302H723V301H722V302H721V302H720V300H719V302H718V301H717V303H716V301H715V302H714V301H713V303H712V301H711V302H710V301H709V301H708V300H707V301H706V302H705V300H704V303H703V302H702V303H701V302H700V300H699V300H698V300H697V300H696V301H695V302H694V300H693V300H692V301H691V298H690V300H689V301H688V300H687V299H686V301H685V301H684V299H683V300H682V300H681V299H680V299H679V296H678V298H677V299H676V299H675V301H674V297H673V297H672V296H671V297H670V297H669V299H668V296H667V294H666V297H665V295H664V297H663V297H662V298H661V298H660V298H659V296H658V295H657V294H656V295H655V293H654V292H653V295H652V294H651V293H650V295H649V292H648V294H647V294H646V292H645V291H644V291H643V291H642V293H641V293H640V292H639V295H638V292H637V293H636V290H635V292H634V293H633V292H632V292H631V290H630V290H629V291H628V294H627V291H626V292H625V293H624V290H623V292H622V291H621V292H620V291H619V292H618V291H617V293H616V292H615V293H614V292H613V290H612V292H611V293H610V292H609V295H608V297H607V296H606V298H605V297H604V297H603V299H602V298H601V300H600V301H599V301H598V301H597V302H596V303H595V303H594V302H593V305H592V304H591V305H590V307H589V306H588V306H587V309H586V309H585V307H584V309H583V310H582V310H581V309H580V313H579V311H578V313H577V311H576V311H575V310H574V312H573V309H572V310H571V311H570V310H569V310H568V310H567V310H566V313H565V311H564V310H563V312H562V311H561V311H560V312H559V310H558V312H557V311H556V311H555V311H554V310H553V311H552V310H551V312H550V310H549V311H548V309H547V311H546V310H545V311H544V312H543V311H542V311H541V311H540V311H539V312H538V311H537V312H536V314H535V312H534V313H533V312H532V312H531V312H530V309H529V310H528V313H527V311H526V311H525V310H524V312H523V310H522V313H521V313H520V312H519V311H518V312H517V311H516V311H515V312H514V311H513V309H512V310H511V311H510V310H509V312H508V310H507V310H506V312H505V311H504V311H503V309H502V311H501V310H500V311H499V311H498V311H497V314H496V312H495V313H494V312H493V312H492V313H491V311H490V312H489V312H488V312H487V312H486V311H485V314H484V314H483V311H482V311H481V313H480V314H479V314H478V314H477V314H476V314H475V313H474V312H473V312H472V311H471V312H470V311H469V311H468V311H467V309H466V311H465V310H464V312H463V310H462V310H461V311H460V310H459V313H458V311H457V311H456V310H455V311H454V312H453V312H452V310H451V312H450V311H449V312H448V312H447V311H446V312H445V311H444V310H443V312H442V311H441V310H440V310H439V311H438V311H437V312H436V314H435V313H434V314H433V313H432V312H431V312H430V312H429V311H428V312H427V311H426V312H425V313H424V312H423V313H422V312H421V313H420V311H419V310H418V312H417V310H416V310H415V311H414V311H413V309H412V311H411V312H410V310H409V310H408V312H407V314H406V313H405V312H404V310H403V309H402V312H401V313H400V314H399V312H398V311H397V311H396V311H395V311H394V312H393V312H392V310H391V310H390V313H389V312H388V312H387V312H386V312H385V312H384V313H383V314H382V311H381V312H380V311H379V311H378V309H377V312H376V310H375V312H374V309H373V312H372V309H371V311H370V311H369V312H368V313H367V314H366V313H365V312H364V310H363V310H362V310H361V311H360V311H359V312H358V310H357V311H356V314H355V310H354V310H353V311H352V310H351V313H350V312H349V310H348V310H347V312H346V311H345V312H344V310H343V311H342V312H341V310H340V311H339V311H338V311H337V311H336V309H335V309H334V309H333V310H332V310H331V311H330V311H329V311H328V311H327V312H326V312H325V311H324V310H323V311H322V311H321V311H320V313H319V313H318V314H317V311H316V309H315V309H314V310H313V309H312V313H311V313H310V312H309V316H308V311H307V312H306V312H305V313H304V309H303V309H302V311H301V310H300V309H299V310H298V310H297V309H296V311H295V310H294V308H293V310H292V309H291V311H290V312H289V312H288V313H287V314H286V312H285V312H284V310H283V311H282V312H281V311H280V313H279V311H278V311H277V312H276V312H275V310H274V312H273V312H272V311H271V313H270V313H269V315H268V310H267V312H266V312H265V312H264V312H263V312H262V310H261V312H260V310H259V311H258V310H257V310H256V308H255V309H254V311H253V310H252V309H251V311H250V309H249V312H248V309H247V312H246V311H245V311H244V310H243V311H242V309H241V309H240V312H239V310H238V310H237V311H236V310H235V308H234V309H233V310H232V309H231V309H230V312H229V310H228V311H227V312H226V310H225V310H224V310H223V311H222V309H221V309H220V309H219V309H218V309H217V311H216V310H215V311H214V312H213V312H212V310H211V310H210Z" fill="#80ffff"/>
<rect x="461" y="231" width="1" height="22" fill="#ff9c9c"/><rect x="500" y="230" width="1" height="18" fill="#ffb0b0"/>
<rect x="781" y="198" width="1" height="58" fill="#000" opacity=".85"/><rect x="781" y="266" width="1" height="10" fill="#000" opacity=".8"/><rect x="781" y="290" width="1" height="10" fill="#000" opacity=".8"/>
<rect x="208" y="185" width="1" height="131" fill="#555"/>
<rect x="208" y="326" width="724" height="118" fill="#000"/>
<path d="M213.5,326V444" stroke="#e6e6e6" stroke-width="1" stroke-dasharray="3,3"/>
<path d="M235.5,326V444" stroke="#7c7c7c" stroke-width="1" stroke-dasharray="1,1"/>
<path d="M257.5,326V444" stroke="#7c7c7c" stroke-width="1" stroke-dasharray="1,1"/>
<path d="M279.5,326V444" stroke="#7c7c7c" stroke-width="1" stroke-dasharray="1,1"/>
<path d="M301.5,326V444" stroke="#7c7c7c" stroke-width="1" stroke-dasharray="1,1"/>
<path d="M323.5,326V444" stroke="#e6e6e6" stroke-width="1" stroke-dasharray="3,3"/>
<path d="M345.5,326V444" stroke="#7c7c7c" stroke-width="1" stroke-dasharray="1,1"/>
<path d="M366.5,326V444" stroke="#7c7c7c" stroke-width="1" stroke-dasharray="1,1"/>
<path d="M388.5,326V444" stroke="#7c7c7c" stroke-width="1" stroke-dasharray="1,1"/>
<path d="M410.5,326V444" stroke="#7c7c7c" stroke-width="1" stroke-dasharray="1,1"/>
<path d="M432.5,326V444" stroke="#e6e6e6" stroke-width="1" stroke-dasharray="3,3"/>
<path d="M454.5,326V444" stroke="#7c7c7c" stroke-width="1" stroke-dasharray="1,1"/>
<path d="M476.5,326V444" stroke="#7c7c7c" stroke-width="1" stroke-dasharray="1,1"/>
<path d="M498.5,326V444" stroke="#7c7c7c" stroke-width="1" stroke-dasharray="1,1"/>
<path d="M520.5,326V444" stroke="#7c7c7c" stroke-width="1" stroke-dasharray="1,1"/>
<path d="M541.5,326V444" stroke="#e6e6e6" stroke-width="1" stroke-dasharray="3,3"/>
<path d="M563.5,326V444" stroke="#7c7c7c" stroke-width="1" stroke-dasharray="1,1"/>
<path d="M585.5,326V444" stroke="#7c7c7c" stroke-width="1" stroke-dasharray="1,1"/>
<path d="M607.5,326V444" stroke="#7c7c7c" stroke-width="1" stroke-dasharray="1,1"/>
<path d="M629.5,326V444" stroke="#7c7c7c" stroke-width="1" stroke-dasharray="1,1"/>
<path d="M651.5,326V444" stroke="#e6e6e6" stroke-width="1" stroke-dasharray="3,3"/>
<path d="M673.5,326V444" stroke="#7c7c7c" stroke-width="1" stroke-dasharray="1,1"/>
<path d="M695.5,326V444" stroke="#7c7c7c" stroke-width="1" stroke-dasharray="1,1"/>
<path d="M716.5,326V444" stroke="#7c7c7c" stroke-width="1" stroke-dasharray="1,1"/>
<path d="M738.5,326V444" stroke="#7c7c7c" stroke-width="1" stroke-dasharray="1,1"/>
<path d="M760.5,326V444" stroke="#e6e6e6" stroke-width="1" stroke-dasharray="3,3"/>
<path d="M782.5,326V444" stroke="#7c7c7c" stroke-width="1" stroke-dasharray="1,1"/>
<path d="M804.5,326V444" stroke="#7c7c7c" stroke-width="1" stroke-dasharray="1,1"/>
<path d="M826.5,326V444" stroke="#7c7c7c" stroke-width="1" stroke-dasharray="1,1"/>
<path d="M848.5,326V444" stroke="#7c7c7c" stroke-width="1" stroke-dasharray="1,1"/>
<path d="M869.5,326V444" stroke="#e6e6e6" stroke-width="1" stroke-dasharray="3,3"/>
<path d="M891.5,326V444" stroke="#7c7c7c" stroke-width="1" stroke-dasharray="1,1"/>
<path d="M913.5,326V444" stroke="#7c7c7c" stroke-width="1" stroke-dasharray="1,1"/>
<path d="M210,349.5H932" stroke="#bdbdbd" stroke-width="1" stroke-dasharray="3,3"/>
<path d="M210,372.5H932" stroke="#bdbdbd" stroke-width="1" stroke-dasharray="3,3"/>
<path d="M210,396.5H932" stroke="#bdbdbd" stroke-width="1" stroke-dasharray="3,3"/>
<path d="M210,419.5H932" stroke="#bdbdbd" stroke-width="1" stroke-dasharray="3,3"/>
<path d="M210,373H211V373H212V372H213V370H214V371H215V373H216V371H217V371H218V369H219V370H220V369H221V368H222V368H223V367H224V367H225V365H226V365H227V364H228V363H229V362H230V363H231V361H232V362H233V359H234V359H235V359H236V359H237V359H238V358H239V359H240V357H241V355H242V355H243V354H244V354H245V354H246V353H247V353H248V353H249V352H250V350H251V350H252V349H253V347H254V345H255V343H256V340H257V337H258V337H259V335H260V339H261V339H262V341H263V341H264V343H265V343H266V344H267V344H268V344H269V342H270V342H271V341H272V341H273V339H274V340H275V340H276V339H277V341H278V339H279V340H280V338H281V340H282V340H283V339H284V338H285V338H286V338H287V335H288V337H289V338H290V339H291V336H292V337H293V336H294V336H295V337H296V339H297V338H298V340H299V339H300V340H301V340H302V339H303V340H304V340H305V340H306V341H307V339H308V339H309V341H310V339H311V340H312V339H313V339H314V341H315V340H316V340H317V342H318V341H319V340H320V339H321V339H322V340H323V341H324V340H325V342H326V339H327V340H328V341H329V339H330V340H331V338H332V339H333V337H334V338H335V339H336V338H337V338H338V338H339V339H340V338H341V338H342V339H343V338H344V338H345V337H346V336H347V338H348V338H349V338H350V338H351V339H352V340H353V340H354V340H355V339H356V340H357V339H358V340H359V340H360V338H361V337H362V339H363V340H364V340H365V340H366V338H367V340H368V338H369V338H370V339H371V339H372V338H373V339H374V341H375V340H376V340H377V340H378V340H379V342H380V341H381V341H382V339H383V341H384V341H385V340H386V340H387V339H388V340H389V339H390V338H391V339H392V338H393V338H394V337H395V337H396V338H397V337H398V340H399V340H400V337H401V337H402V339H403V339H404V339H405V339H406V338H407V341H408V340H409V339H410V338H411V339H412V338H413V338H414V337H415V337H416V338H417V338H418V339H419V339H420V339H421V340H422V339H423V339H424V336H425V338H426V338H427V338H428V338H429V336H430V338H431V337H432V338H433V337H434V338H435V338H436V337H437V338H438V337H439V336H440V338H441V337H442V334H443V339H444V339H445V339H446V339H447V337H448V339H449V339H450V339H451V339H452V339H453V341H454V340H455V340H456V340H457V341H458V343H459V343H460V343H461V345H462V344H463V345H464V345H465V345H466V346H467V346H468V348H469V349H470V348H471V350H472V350H473V349H474V349H475V348H476V346H477V346H478V344H479V342H480V342H481V344H482V346H483V346H484V347H485V346H486V346H487V346H488V348H489V348H490V347H491V347H492V348H493V347H494V348H495V347H496V346H497V343H498V346H499V347H500V346H501V345H502V346H503V345H504V345H505V345H506V346H507V346H508V346H509V345H510V344H511V345H512V347H513V347H514V347H515V346H516V344H517V346H518V347H519V347H520V347H521V348H522V347H523V346H524V347H525V347H526V347H527V346H528V347H529V346H530V346H531V344H532V345H533V348H534V349H535V347H536V349H537V347H538V350H539V348H540V348H541V348H542V348H543V350H544V349H545V348H546V348H547V348H548V350H549V350H550V349H551V349H552V350H553V350H554V350H555V350H556V351H557V351H558V350H559V351H560V353H561V351H562V352H563V351H564V352H565V349H566V351H567V351H568V352H569V353H570V354H571V353H572V355H573V352H574V352H575V354H576V354H577V356H578V356H579V358H580V357H581V356H582V356H583V355H584V355H585V356H586V355H587V358H588V361H589V361H590V364H591V367H592V370H593V372H594V374H595V377H596V379H597V379H598V382H599V386H600V388H601V389H602V390H603V394H604V393H605V397H606V396H607V398H608V399H609V400H610V401H611V403H612V403H613V404H614V406H615V406H616V407H617V408H618V409H619V409H620V409H621V411H622V411H623V412H624V413H625V412H626V413H627V414H628V414H629V415H630V417H631V417H632V416H633V418H634V418H635V416H636V418H637V419H638V417H639V417H640V420H641V418H642V417H643V417H644V418H645V418H646V420H647V419H648V419H649V420H650V420H651V420H652V419H653V421H654V419H655V420H656V419H657V421H658V417H659V419H660V420H661V420H662V422H663V419H664V421H665V421H666V422H667V421H668V423H669V420H670V422H671V421H672V421H673V421H674V422H675V420H676V421H677V421H678V422H679V421H680V423H681V421H682V423H683V422H684V422H685V423H686V422H687V423H688V423H689V421H690V422H691V424H692V423H693V424H694V424H695V423H696V422H697V421H698V423H699V421H700V423H701V421H702V422H703V421H704V421H705V422H706V421H707V423H708V422H709V421H710V424H711V424H712V424H713V423H714V422H715V421H716V422H717V423H718V424H719V425H720V424H721V424H722V424H723V422H724V422H725V421H726V422H727V423H728V422H729V422H730V421H731V423H732V422H733V423H734V422H735V423H736V422H737V423H738V423H739V423H740V423H741V424H742V424H743V423H744V422H745V421H746V423H747V422H748V422H749V423H750V423H751V421H752V425H753V424H754V423H755V425H756V423H757V424H758V423H759V424H760V423H761V425H762V424H763V422H764V423H765V423H766V423H767V423H768V423H769V423H770V422H771V424H772V424H773V426H774V425H775V424H776V424H777V424H778V425H779V425H780V425H781V424H782V424H783V424H784V423H785V423H786V425H787V424H788V424H789V424H790V424H791V424H792V425H793V426H794V425H795V426H796V425H797V427H798V425H799V425H800V425H801V425H802V425H803V424H804V425H805V421H806V423H807V425H808V424H809V424H810V424H811V425H812V423H813V423H814V423H815V425H816V424H817V424H818V426H819V425H820V424H821V423H822V424H823V424H824V423H825V426H826V425H827V426H828V426H829V426H830V426H831V426H832V425H833V425H834V425H835V422H836V424H837V423H838V424H839V424H840V425H841V423H842V426H843V423H844V425H845V425H846V424H847V425H848V424H849V425H850V424H851V425H852V425H853V426H854V424H855V425H856V424H857V424H858V424H859V425H860V426H861V426H862V425H863V424H864V423H865V425H866V425H867V425H868V425H869V425H870V423H871V424H872V424H873V423H874V423H875V424H876V422H877V423H878V422H879V423H880V425H881V422H882V422H883V423H884V424H885V425H886V424H887V423H888V425H889V424H890V424H891V424H892V424H893V422H894V422H895V422H896V423H897V422H898V420H899V421H900V422H901V424H902V424H903V424H904V424H905V422H906V423H907V422H908V423H909V422H910V423H911V423H912V422H913V423H914V422H915V422H916V422H917V422H918V421H919V423H920V422H921V421H922V422H923V421H924V421H925V421H926V421H927V423H928V422H929V422H930V423H931V423H932V430V430H931V431H930V428H929V429H928V429H927V431H926V431H925V430H924V430H923V429H922V428H921V429H920V429H919V431H918V430H917V430H916V431H915V431H914V430H913V430H912V431H911V429H910V430H909V430H908V430H907V431H906V431H905V433H904V430H903V432H902V432H901V432H900V432H899V432H898V432H897V433H896V431H895V433H894V432H893V431H892V432H891V433H890V431H889V431H888V432H887V431H886V432H885V430H884V429H883V431H882V430H881V434H880V432H879V433H878V433H877V431H876V432H875V432H874V435H873V434H872V432H871V434H870V432H869V430H868V431H867V432H866V433H865V432H864V431H863V433H862V432H861V431H860V433H859V433H858V432H857V433H856V433H855V435H854V435H853V432H852V431H851V431H850V432H849V431H848V432H847V432H846V433H845V431H844V433H843V434H842V433H841V432H840V433H839V431H838V431H837V432H836V433H835V432H834V432H833V432H832V432H831V431H830V431H829V432H828V431H827V433H826V433H825V433H824V432H823V433H822V433H821V433H820V433H819V432H818V433H817V432H816V434H815V434H814V435H813V434H812V434H811V432H810V432H809V434H808V433H807V434H806V434H805V434H804V433H803V435H802V433H801V433H800V433H799V433H798V433H797V431H796V433H795V433H794V433H793V434H792V433H791V434H790V432H789V433H788V432H787V432H786V433H785V434H784V433H783V436H782V435H781V432H780V433H779V432H778V433H777V433H776V432H775V432H774V431H773V431H772V431H771V431H770V433H769V432H768V432H767V432H766V431H765V430H764V430H763V432H762V431H761V432H760V432H759V433H758V434H757V432H756V433H755V433H754V431H753V436H752V432H751V433H750V432H749V433H748V433H747V431H746V432H745V432H744V432H743V434H742V433H741V432H740V432H739V434H738V431H737V431H736V431H735V433H734V433H733V431H732V431H731V431H730V433H729V432H728V432H727V434H726V431H725V432H724V433H723V432H722V432H721V432H720V430H719V432H718V431H717V432H716V432H715V432H714V432H713V432H712V432H711V430H710V431H709V433H708V432H707V431H706V432H705V432H704V432H703V432H702V432H701V433H700V434H699V430H698V432H697V433H696V432H695V430H694V432H693V430H692V432H691V430H690V432H689V430H688V433H687V432H686V432H685V435H684V431H683V431H682V431H681V431H680V431H679V431H678V430H677V431H676V433H675V432H674V431H673V432H672V432H671V433H670V432H669V430H668V431H667V431H666V429H665V431H664V430H663V431H662V430H661V431H660V430H659V429H658V430H657V430H656V430H655V430H654V430H653V430H652V431H651V431H650V429H649V432H648V429H647V429H646V430H645V429H644V429H643V429H642V429H641V428H640V429H639V427H638V426H637V426H636V426H635V424H634V426H633V425H632V426H631V425H630V424H629V426H628V426H627V423H626V422H625V422H624V421H623V420H622V420H621V420H620V419H619V419H618V419H617V419H616V417H615V417H614V417H613V416H612V414H611V415H610V414H609V413H608V411H607V411H606V408H605V409H604V407H603V405H602V403H601V402H600V402H599V400H598V400H597V399H596V398H595V397H594V395H593V394H592V393H591V391H590V390H589V388H588V386H587V384H586V385H585V382H584V384H583V384H582V385H581V383H580V386H579V383H578V383H577V383H576V383H575V382H574V386H573V385H572V383H571V383H570V383H569V386H568V383H567V382H566V382H565V382H564V380H563V381H562V382H561V381H560V384H559V385H558V384H557V385H556V382H555V381H554V381H553V383H552V382H551V381H550V382H549V383H548V381H547V382H546V381H545V382H544V381H543V381H542V382H541V381H540V381H539V382H538V379H537V379H536V378H535V379H534V380H533V378H532V381H531V379H530V380H529V381H528V379H527V378H526V379H525V379H524V379H523V379H522V379H521V379H520V379H519V379H518V380H517V380H516V380H515V380H514V382H513V380H512V382H511V379H510V380H509V379H508V380H507V381H506V381H505V380H504V380H503V379H502V381H501V380H500V381H499V380H498V380H497V379H496V379H495V379H494V379H493V380H492V380H491V381H490V380H489V380H488V378H487V379H486V378H485V379H484V380H483V381H482V383H481V380H480V381H479V381H478V379H477V380H476V380H475V378H474V378H473V379H472V379H471V380H470V379H469V378H468V378H467V377H466V377H465V380H464V378H463V378H462V376H461V377H460V376H459V375H458V375H457V374H456V373H455V375H454V373H453V373H452V374H451V375H450V373H449V375H448V374H447V375H446V376H445V376H444V376H443V375H442V376H441V374H440V375H439V373H438V374H437V375H436V375H435V374H434V375H433V375H432V377H431V376H430V375H429V376H428V374H427V374H426V375H425V373H424V374H423V373H422V373H421V375H420V375H419V375H418V375H417V375H416V373H415V375H414V375H413V376H412V374H411V374H410V375H409V374H408V374H407V373H406V374H405V375H404V374H403V375H402V375H401V376H400V375H399V376H398V375H397V375H396V374H395V375H394V374H393V374H392V374H391V373H390V373H389V374H388V372H387V373H386V373H385V373H384V373H383V373H382V373H381V375H380V376H379V374H378V375H377V374H376V373H375V374H374V372H373V374H372V373H371V373H370V373H369V375H368V374H367V374H366V374H365V375H364V375H363V374H362V375H361V374H360V375H359V374H358V374H357V374H356V375H355V373H354V375H353V374H352V374H351V373H350V374H349V374H348V373H347V375H346V373H345V375H344V373H343V374H342V374H341V375H340V375H339V375H338V377H337V376H336V376H335V378H334V376H333V376H332V377H331V376H330V376H329V375H328V378H327V377H326V379H325V378H324V378H323V379H322V377H321V376H320V376H319V376H318V375H317V377H316V375H315V375H314V377H313V374H312V376H311V376H310V375H309V376H308V374H307V373H306V373H305V373H304V373H303V371H302V371H301V373H300V373H299V372H298V372H297V371H296V372H295V371H294V372H293V372H292V371H291V372H290V370H289V369H288V366H287V370H286V372H285V371H284V372H283V371H282V372H281V372H280V373H279V372H278V374H277V374H276V373H275V374H274V374H273V373H272V373H271V373H270V375H269V375H268V376H267V375H266V375H265V375H264V374H263V372H262V374H261V371H260V367H259V367H258V370H257V373H256V374H255V379H254V380H253V381H252V379H251V380H250V380H249V379H248V378H247V379H246V380H245V378H244V381H243V381H242V380H241V382H240V383H239V382H238V383H237V385H236V385H235V385H234V384H233V386H232V387H231V388H230V388H229V388H228V389H227V390H226V390H225V390H224V392H223V392H222V393H221V392H220V393H219V392H218V394H217V393H216V393H215V392H214V392H213V393H212V392H211V393H210Z" fill="#ffff80"/>
<rect x="602" y="362" width="1" height="30" fill="#d9d95c"/><rect x="629" y="364" width="1" height="52" fill="#d9d95c"/><rect x="702" y="382" width="1" height="42" fill="#d9d95c"/>
<rect x="208" y="326" width="1" height="118" fill="#555"/>
<rect x="208" y="453" width="724" height="129" fill="#000"/>
<path d="M213.5,453V582" stroke="#e6e6e6" stroke-width="1" stroke-dasharray="3,3"/>
<path d="M235.5,453V582" stroke="#7c7c7c" stroke-width="1" stroke-dasharray="1,1"/>
<path d="M257.5,453V582" stroke="#7c7c7c" stroke-width="1" stroke-dasharray="1,1"/>
<path d="M279.5,453V582" stroke="#7c7c7c" stroke-width="1" stroke-dasharray="1,1"/>
<path d="M301.5,453V582" stroke="#7c7c7c" stroke-width="1" stroke-dasharray="1,1"/>
<path d="M323.5,453V582" stroke="#e6e6e6" stroke-width="1" stroke-dasharray="3,3"/>
<path d="M345.5,453V582" stroke="#7c7c7c" stroke-width="1" stroke-dasharray="1,1"/>
<path d="M366.5,453V582" stroke="#7c7c7c" stroke-width="1" stroke-dasharray="1,1"/>
<path d="M388.5,453V582" stroke="#7c7c7c" stroke-width="1" stroke-dasharray="1,1"/>
<path d="M410.5,453V582" stroke="#7c7c7c" stroke-width="1" stroke-dasharray="1,1"/>
<path d="M432.5,453V582" stroke="#e6e6e6" stroke-width="1" stroke-dasharray="3,3"/>
<path d="M454.5,453V582" stroke="#7c7c7c" stroke-width="1" stroke-dasharray="1,1"/>
<path d="M476.5,453V582" stroke="#7c7c7c" stroke-width="1" stroke-dasharray="1,1"/>
<path d="M498.5,453V582" stroke="#7c7c7c" stroke-width="1" stroke-dasharray="1,1"/>
<path d="M520.5,453V582" stroke="#7c7c7c" stroke-width="1" stroke-dasharray="1,1"/>
<path d="M541.5,453V582" stroke="#e6e6e6" stroke-width="1" stroke-dasharray="3,3"/>
<path d="M563.5,453V582" stroke="#7c7c7c" stroke-width="1" stroke-dasharray="1,1"/>
<path d="M585.5,453V582" stroke="#7c7c7c" stroke-width="1" stroke-dasharray="1,1"/>
<path d="M607.5,453V582" stroke="#7c7c7c" stroke-width="1" stroke-dasharray="1,1"/>
<path d="M629.5,453V582" stroke="#7c7c7c" stroke-width="1" stroke-dasharray="1,1"/>
<path d="M651.5,453V582" stroke="#e6e6e6" stroke-width="1" stroke-dasharray="3,3"/>
<path d="M673.5,453V582" stroke="#7c7c7c" stroke-width="1" stroke-dasharray="1,1"/>
<path d="M695.5,453V582" stroke="#7c7c7c" stroke-width="1" stroke-dasharray="1,1"/>
<path d="M716.5,453V582" stroke="#7c7c7c" stroke-width="1" stroke-dasharray="1,1"/>
<path d="M738.5,453V582" stroke="#7c7c7c" stroke-width="1" stroke-dasharray="1,1"/>
<path d="M760.5,453V582" stroke="#e6e6e6" stroke-width="1" stroke-dasharray="3,3"/>
<path d="M782.5,453V582" stroke="#7c7c7c" stroke-width="1" stroke-dasharray="1,1"/>
<path d="M804.5,453V582" stroke="#7c7c7c" stroke-width="1" stroke-dasharray="1,1"/>
<path d="M826.5,453V582" stroke="#7c7c7c" stroke-width="1" stroke-dasharray="1,1"/>
<path d="M848.5,453V582" stroke="#7c7c7c" stroke-width="1" stroke-dasharray="1,1"/>
<path d="M869.5,453V582" stroke="#e6e6e6" stroke-width="1" stroke-dasharray="3,3"/>
<path d="M891.5,453V582" stroke="#7c7c7c" stroke-width="1" stroke-dasharray="1,1"/>
<path d="M913.5,453V582" stroke="#7c7c7c" stroke-width="1" stroke-dasharray="1,1"/>
<path d="M210,479.5H932" stroke="#bdbdbd" stroke-width="1" stroke-dasharray="3,3"/>
<path d="M210,504.5H932" stroke="#bdbdbd" stroke-width="1" stroke-dasharray="3,3"/>
<path d="M210,530.5H932" stroke="#bdbdbd" stroke-width="1" stroke-dasharray="3,3"/>
<path d="M210,555.5H932" stroke="#bdbdbd" stroke-width="1" stroke-dasharray="3,3"/>
<path d="M210,511H211V509H212V510H213V509H214V511H215V509H216V510H217V509H218V509H219V506H220V506H221V505H222V504H223V505H224V503H225V505H226V502H227V502H228V501H229V501H230V500H231V501H232V498H233V498H234V497H235V497H236V494H237V496H238V496H239V495H240V494H241V493H242V493H243V493H244V492H245V493H246V491H247V490H248V490H249V486H250V490H251V489H252V489H253V488H254V488H255V483H256V480H257V476H258V475H259V476H260V476H261V474H262V477H263V476H264V478H265V478H266V478H267V478H268V477H269V477H270V476H271V475H272V472H273V471H274V469H275V470H276V466H277V467H278V468H279V471H280V472H281V474H282V474H283V477H284V477H285V478H286V477H287V477H288V479H289V479H290V479H291V479H292V479H293V480H294V480H295V479H296V479H297V481H298V481H299V480H300V479H301V478H302V480H303V478H304V477H305V476H306V477H307V475H308V475H309V473H310V473H311V473H312V471H313V472H314V473H315V473H316V474H317V476H318V474H319V474H320V477H321V478H322V478H323V478H324V477H325V479H326V477H327V476H328V477H329V476H330V477H331V477H332V477H333V477H334V476H335V476H336V475H337V474H338V473H339V473H340V475H341V475H342V474H343V474H344V473H345V471H346V470H347V470H348V468H349V468H350V468H351V467H352V467H353V467H354V467H355V468H356V468H357V468H358V468H359V467H360V468H361V469H362V467H363V470H364V468H365V469H366V469H367V468H368V469H369V466H370V469H371V470H372V467H373V466H374V467H375V466H376V468H377V469H378V469H379V467H380V467H381V467H382V467H383V467H384V467H385V466H386V466H387V467H388V467H389V466H390V468H391V466H392V466H393V468H394V466H395V468H396V469H397V468H398V469H399V469H400V468H401V468H402V467H403V466H404V467H405V467H406V468H407V468H408V467H409V469H410V466H411V468H412V470H413V471H414V469H415V469H416V469H417V468H418V469H419V469H420V468H421V468H422V467H423V468H424V468H425V469H426V468H427V468H428V468H429V468H430V469H431V470H432V470H433V467H434V469H435V468H436V468H437V469H438V467H439V468H440V467H441V468H442V469H443V468H444V467H445V468H446V467H447V467H448V466H449V468H450V468H451V467H452V468H453V469H454V467H455V468H456V470H457V467H458V469H459V469H460V469H461V468H462V467H463V466H464V467H465V464H466V460H467V460H468V457H469V460H470V458H471V458H472V458H473V458H474V459H475V459H476V457H477V460H478V461H479V462H480V464H481V466H482V467H483V470H484V471H485V473H486V473H487V474H488V475H489V476H490V475H491V475H492V476H493V479H494V478H495V479H496V480H497V479H498V477H499V477H500V476H501V477H502V475H503V474H504V476H505V473H506V475H507V472H508V473H509V472H510V472H511V472H512V473H513V471H514V472H515V472H516V472H517V471H518V472H519V471H520V471H521V474H522V470H523V471H524V474H525V472H526V472H527V473H528V473H529V472H530V473H531V473H532V472H533V474H534V472H535V473H536V472H537V474H538V473H539V473H540V473H541V474H542V472H543V472H544V472H545V474H546V474H547V472H548V472H549V472H550V472H551V472H552V473H553V476H554V475H555V474H556V476H557V476H558V477H559V476H560V476H561V478H562V477H563V477H564V478H565V479H566V478H567V478H568V479H569V476H570V478H571V479H572V479H573V478H574V478H575V480H576V480H577V479H578V480H579V480H580V479H581V479H582V479H583V477H584V477H585V478H586V478H587V478H588V479H589V484H590V486H591V487H592V490H593V491H594V493H595V496H596V497H597V501H598V503H599V503H600V504H601V508H602V508H603V510H604V513H605V516H606V516H607V519H608V521H609V522H610V524H611V526H612V525H613V525H614V526H615V528H616V530H617V531H618V532H619V535H620V536H621V537H622V539H623V537H624V541H625V540H626V540H627V541H628V540H629V541H630V541H631V544H632V544H633V542H634V543H635V544H636V543H637V544H638V545H639V545H640V546H641V544H642V544H643V545H644V544H645V545H646V545H647V546H648V548H649V549H650V548H651V546H652V549H653V548H654V548H655V549H656V548H657V547H658V548H659V548H660V548H661V548H662V547H663V548H664V546H665V548H666V549H667V547H668V547H669V548H670V548H671V547H672V546H673V548H674V547H675V549H676V547H677V547H678V548H679V547H680V547H681V545H682V548H683V546H684V547H685V547H686V548H687V548H688V548H689V547H690V548H691V547H692V546H693V547H694V547H695V545H696V545H697V546H698V542H699V543H700V542H701V543H702V544H703V544H704V544H705V544H706V543H707V543H708V543H709V542H710V543H711V543H712V543H713V543H714V543H715V542H716V544H717V544H718V543H719V543H720V542H721V542H722V543H723V543H724V541H725V543H726V543H727V543H728V544H729V544H730V544H731V543H732V545H733V544H734V546H735V545H736V546H737V545H738V544H739V544H740V544H741V545H742V545H743V544H744V545H745V547H746V547H747V546H748V544H749V545H750V544H751V544H752V544H753V544H754V544H755V544H756V543H757V543H758V544H759V543H760V542H761V545H762V544H763V543H764V543H765V542H766V543H767V543H768V543H769V543H770V545H771V544H772V545H773V546H774V545H775V546H776V545H777V546H778V544H779V546H780V544H781V545H782V546H783V547H784V548H785V548H786V548H787V546H788V546H789V546H790V547H791V546H792V546H793V546H794V547H795V547H796V546H797V546H798V546H799V546H800V546H801V546H802V546H803V546H804V547H805V547H806V546H807V546H808V545H809V544H810V545H811V546H812V545H813V547H814V546H815V547H816V549H817V547H818V546H819V548H820V546H821V546H822V546H823V548H824V548H825V547H826V548H827V547H828V547H829V546H830V546H831V546H832V544H833V547H834V547H835V548H836V546H837V546H838V545H839V545H840V545H841V545H842V544H843V546H844V544H845V545H846V545H847V546H848V546H849V547H850V547H851V546H852V544H853V547H854V547H855V547H856V544H857V546H858V547H859V546H860V546H861V547H862V546H863V548H864V548H865V548H866V548H867V546H868V545H869V547H870V546H871V545H872V547H873V546H874V546H875V544H876V546H877V545H878V547H879V546H880V547H881V548H882V546H883V546H884V546H885V546H886V545H887V547H888V546H889V546H890V547H891V546H892V547H893V549H894V546H895V547H896V545H897V547H898V547H899V545H900V546H901V546H902V546H903V545H904V545H905V545H906V546H907V547H908V546H909V547H910V546H911V548H912V546H913V548H914V546H915V548H916V546H917V546H918V547H919V546H920V548H921V547H922V546H923V546H924V546H925V544H926V545H927V546H928V545H929V546H930V547H931V545H932V557V557H931V557H930V556H929V557H928V557H927V556H926V556H925V556H924V558H923V557H922V558H921V556H920V556H919V557H918V556H917V557H916V558H915V556H914V559H913V556H912V557H911V555H910V557H909V556H908V557H907V557H906V558H905V557H904V557H903V556H902V556H901V557H900V557H899V556H898V556H897V557H896V556H895V557H894V558H893V557H892V556H891V558H890V557H889V558H888V557H887V558H886V556H885V555H884V557H883V555H882V556H881V556H880V556H879V556H878V556H877V556H876V557H875V557H874V555H873V555H872V555H871V557H870V556H869V556H868V556H867V557H866V556H865V557H864V558H863V556H862V557H861V556H860V557H859V556H858V559H857V560H856V558H855V557H854V558H853V556H852V556H851V557H850V557H849V557H848V555H847V555H846V556H845V557H844V556H843V556H842V556H841V556H840V557H839V556H838V557H837V556H836V557H835V555H834V555H833V556H832V556H831V557H830V557H829V559H828V556H827V556H826V557H825V555H824V555H823V557H822V555H821V555H820V554H819V555H818V554H817V556H816V555H815V555H814V556H813V555H812V556H811V556H810V557H809V558H808V557H807V556H806V557H805V555H804V556H803V554H802V556H801V556H800V556H799V557H798V555H797V555H796V556H795V556H794V555H793V555H792V556H791V558H790V556H789V557H788V555H787V556H786V554H785V556H784V554H783V555H782V558H781V555H780V556H779V555H778V555H777V557H776V557H775V555H774V557H773V554H772V556H771V554H770V556H769V554H768V556H767V555H766V556H765V555H764V554H763V556H762V554H761V554H760V555H759V556H758V554H757V556H756V555H755V554H754V555H753V553H752V553H751V554H750V556H749V554H748V554H747V553H746V554H745V554H744V553H743V556H742V553H741V554H740V554H739V554H738V554H737V555H736V555H735V554H734V553H733V554H732V553H731V554H730V553H729V553H728V554H727V554H726V555H725V556H724V555H723V555H722V558H721V556H720V555H719V556H718V556H717V557H716V555H715V556H714V555H713V554H712V555H711V554H710V555H709V556H708V555H707V556H706V555H705V556H704V556H703V555H702V556H701V555H700V555H699V554H698V554H697V554H696V555H695V555H694V555H693V556H692V555H691V558H690V557H689V556H688V558H687V557H686V558H685V558H684V557H683V557H682V555H681V555H680V555H679V557H678V557H677V557H676V556H675V556H674V557H673V557H672V557H671V556H670V555H669V556H668V556H667V558H666V558H665V557H664V557H663V558H662V558H661V557H660V557H659V557H658V558H657V558H656V558H655V556H654V556H653V556H652V558H651V557H650V560H649V556H648V557H647V556H646V556H645V555H644V555H643V556H642V556H641V557H640V556H639V557H638V556H637V554H636V555H635V554H634V554H633V557H632V555H631V554H630V552H629V553H628V552H627V551H626V550H625V551H624V550H623V548H622V550H621V548H620V548H619V547H618V547H617V546H616V545H615V544H614V546H613V542H612V542H611V541H610V541H609V538H608V537H607V536H606V536H605V532H604V532H603V530H602V530H601V528H600V527H599V525H598V525H597V524H596V522H595V521H594V519H593V519H592V518H591V516H590V513H589V513H588V510H587V508H586V507H585V509H584V507H583V508H582V507H581V508H580V507H579V508H578V508H577V507H576V506H575V506H574V506H573V508H572V509H571V508H570V509H569V507H568V508H567V508H566V510H565V506H564V506H563V506H562V508H561V507H560V506H559V508H558V506H557V507H556V506H555V507H554V506H553V505H552V506H551V506H550V504H549V505H548V505H547V504H546V506H545V505H544V507H543V507H542V506H541V505H540V505H539V504H538V506H537V507H536V505H535V506H534V505H533V506H532V505H531V504H530V504H529V505H528V502H527V503H526V502H525V503H524V505H523V504H522V504H521V504H520V503H519V503H518V505H517V506H516V504H515V505H514V505H513V504H512V503H511V503H510V504H509V505H508V504H507V505H506V506H505V506H504V506H503V508H502V507H501V508H500V507H499V509H498V508H497V508H496V507H495V508H494V508H493V507H492V506H491V506H490V506H489V507H488V503H487V504H486V504H485V504H484V505H483V503H482V499H481V496H480V495H479V494H478V493H477V493H476V495H475V496H474V494H473V493H472V495H471V496H470V495H469V495H468V496H467V494H466V497H465V499H464V502H463V502H462V502H461V502H460V501H459V503H458V502H457V503H456V502H455V501H454V501H453V502H452V502H451V502H450V502H449V503H448V502H447V503H446V502H445V502H444V501H443V500H442V501H441V500H440V502H439V500H438V500H437V500H436V501H435V501H434V503H433V502H432V502H431V503H430V501H429V501H428V502H427V500H426V501H425V501H424V501H423V502H422V501H421V502H420V501H419V500H418V500H417V502H416V502H415V501H414V502H413V503H412V501H411V502H410V501H409V500H408V499H407V500H406V499H405V502H404V501H403V502H402V502H401V503H400V501H399V501H398V501H397V501H396V501H395V500H394V501H393V503H392V502H391V502H390V504H389V503H388V504H387V505H386V502H385V500H384V500H383V500H382V499H381V499H380V501H379V503H378V500H377V501H376V500H375V501H374V504H373V503H372V502H371V502H370V502H369V501H368V500H367V501H366V502H365V501H364V502H363V502H362V500H361V500H360V498H359V498H358V498H357V499H356V497H355V498H354V497H353V499H352V498H351V499H350V501H349V501H348V503H347V503H346V504H345V504H344V505H343V506H342V505H341V504H340V506H339V505H338V505H337V505H336V505H335V507H334V506H333V508H332V506H331V509H330V508H329V509H328V510H327V507H326V509H325V508H324V508H323V509H322V509H321V508H320V506H319V507H318V506H317V507H316V506H315V506H314V506H313V505H312V506H311V504H310V503H309V503H308V504H307V504H306V505H305V504H304V505H303V505H302V505H301V505H300V509H299V508H298V507H297V507H296V510H295V510H294V509H293V510H292V511H291V511H290V509H289V509H288V508H287V508H286V508H285V507H284V506H283V503H282V503H281V503H280V502H279V505H278V503H277V503H276V503H275V504H274V505H273V506H272V506H271V508H270V507H269V507H268V508H267V509H266V510H265V510H264V508H263V506H262V507H261V504H260V503H259V503H258V503H257V506H256V515H255V517H254V515H253V517H252V517H251V517H250V518H249V517H248V518H247V518H246V519H245V519H244V518H243V518H242V518H241V520H240V520H239V521H238V520H237V520H236V521H235V521H234V522H233V521H232V524H231V522H230V526H229V525H228V524H227V525H226V525H225V525H224V526H223V525H222V525H221V527H220V527H219V527H218V528H217V529H216V530H215V530H214V529H213V530H212V530H211V532H210Z" fill="#80ff80"/>
<rect x="411" y="500" width="1" height="11" fill="#6fe06f"/>
<rect x="208" y="453" width="1" height="129" fill="#555"/>
</svg>
<svg class="abs" style="left:0;top:0" width="945" height="680" viewBox="0 0 945 680">
<defs>
<radialGradient id="orb" cx="50%" cy="35%" r="70%"><stop offset="0" stop-color="#ffffff"/><stop offset=".55" stop-color="#e4e9f0"/><stop offset="1" stop-color="#9eb0c8"/></radialGradient>
<linearGradient id="gr" x1="0" y1="0" x2="0" y2="1"><stop offset="0" stop-color="#b9b9b9"/><stop offset="1" stop-color="#9b9b9b"/></linearGradient>
<linearGradient id="redx" x1="0" y1="0" x2="0" y2="1"><stop offset="0" stop-color="#ee6a5f"/><stop offset=".5" stop-color="#d8282b"/><stop offset="1" stop-color="#c41f25"/></linearGradient>
<linearGradient id="tube" x1="0" y1="0" x2="1" y2="0"><stop offset="0" stop-color="#6f9fe6"/><stop offset=".4" stop-color="#ffffff"/><stop offset=".7" stop-color="#f1f6fc"/><stop offset="1" stop-color="#5f8fdc"/></linearGradient>
<linearGradient id="er1" x1="0" y1="0" x2="1" y2="1"><stop offset="0" stop-color="#f3b3b3"/><stop offset="1" stop-color="#d98282"/></linearGradient>
<linearGradient id="er2" x1="0" y1="0" x2="1" y2="1"><stop offset="0" stop-color="#4d7ea6"/><stop offset="1" stop-color="#27506f"/></linearGradient>
<linearGradient id="flp" x1="0" y1="0" x2="0" y2="1"><stop offset="0" stop-color="#5d8fe0"/><stop offset="1" stop-color="#2a5cb8"/></linearGradient>
</defs>
<circle cx="21.8" cy="22.5" r="16.8" fill="url(#orb)" stroke="#8797b2" stroke-width="1.2"/>
<circle cx="21.8" cy="22.5" r="15.4" fill="none" stroke="#ffffff" stroke-width="1" opacity=".7"/>
<path d="M8,20 q0,-6 6,-8 q5,-3 11,-1.5 q6,0 8.5,5 q3,4 1.5,8 q-1,4 -5,4.5 l-2,5 l-3,-1 l-2,-5 q-3,-3 -7,-1 q-5,1 -7,-2 q-1.5,-2 -1,-4z" fill="#eef1f8" stroke="#1b1b9a" stroke-width="1.1"/>
<path d="M11,17 q3,-4 7,-3 M14,12.5 h9 M13,15 h11 M18,18 l8,-1 M10,20.5 q4,-2 8,0 M24,13 q5,0 7,3 M26,17 q4,0 6,2.5 M12,22.5 q3,-1.5 6,0 M15,19 l3,2" stroke="#1f22a8" stroke-width="1.3" fill="none"/>
<path d="M12,24 q4,1 7,-1.5 q3,-2 6,0 l2,-2 q4,-2 8,0 q1,4 -2,7 q-2,2 -5,1.5 l-1.5,5 l-3,-1 l-2.5,-6 q-3,-2 -6,-1 q-3,0 -3,-2z" fill="#0f3f42"/>
<path d="M20,25 l3,-1 M26,23 l4,-1 M28,26 l3,-1 M24,28 l2,1 M30,23 l3,1" stroke="#49c2b6" stroke-width="1.1"/><path d="M13.5,24.2 q3,.6 5,-1" stroke="#dfe9ee" stroke-width="1"/><path d="M31,27 l2,-2" stroke="#7a2fa0" stroke-width="1.2"/>
<path d="M6.5,21 L12.6,11.3 L16.5,17.2 L19.4,16.2 L23.6,22.3 L28.2,13.3 L35.6,22.3" stroke="#f01018" stroke-width="1.5" fill="none" stroke-linejoin="round"/>
<path d="M6.1,32 L8.7,31.7 L12.3,29.1 L16.8,33 L22,33 L27.8,30.4 L34.3,34 L35.6,32.7" stroke="#f01018" stroke-width="1.5" fill="none" stroke-linejoin="round"/>
<path d="M53,11 v-2.5 a3.3,3.3 0 0 1 6.6,0 v2.5" stroke="#8f8f8f" stroke-width="1.6" fill="none"/>
<rect x="51" y="11" width="10.5" height="7.5" rx="1" fill="#9a9a9a"/>
<path d="M72.5,5.5 L84,11.5 L72.5,17.5z" fill="#9c9c9c"/>
<path d="M96.8,4.8 h6.4 l4,4 v6 l-4,4 h-6.4 l-4,-4 v-6z" fill="#a6a6a6" stroke="#c9c9c9" stroke-width=".8"/>
<path d="M98,9 q2,-3 4,0 v6 h-4z" fill="#c4c4c4"/>
<rect x="127.5" y="8.3" width="5.5" height="1.3" fill="#1e3f7f"/><path d="M127.3,11 h6 l-3,3.2z" fill="#1e3f7f"/>
<rect x="884" y="11.7" width="7" height="1.8" fill="#5a5f6a"/><rect x="884" y="13.5" width="7" height="1" fill="#f4f8fd"/>
<rect x="906.8" y="8.3" width="6" height="4.7" fill="#dfe9f7" stroke="#7a99c4" stroke-width="1.2"/><path d="M908.5,8 v-1.6 h6 v4.6 h-1.2" fill="none" stroke="#6482ad" stroke-width="1.2"/>
<path d="M930,6.8 l6.6,6.8 M936.6,6.8 l-6.6,6.8" stroke="#7d9cc8" stroke-width="2"/>
<g transform="translate(12.5,54.5) rotate(44)"><path d="M0,0 L2,-1.8 L14,-1.8 L14,1.8 L2,1.8Z" fill="#b0b0b0"/><rect x="4.5" y="-1.8" width="1.2" height="3.6" fill="#d8d8d8"/><rect x="8" y="-1.8" width="1.2" height="3.6" fill="#d8d8d8"/><rect x="11.5" y="-1.8" width="1" height="3.6" fill="#8f8f8f"/><rect x="14" y="-2.8" width="3" height="5.6" fill="#9b9b9b"/><path d="M17,-4 h15 l4,1.8 v4.4 l-4,1.8 h-15z" fill="#a2a2a2"/><rect x="17" y="-4" width="19" height="2" fill="#bdbdbd" opacity=".8"/><rect x="36" y="-1.5" width="4" height="3" fill="#b3b3b3"/></g>
<path d="M65,54 h26 v7 h-13 l8,7 l-8,7 h13 v7 h-26 v-5 l10,-9 l-10,-9z" fill="#a6a6a6"/><path d="M65,54 h26 v2 h-26z M78,61 l8,7 l-2,1.5 l-8,-7z" fill="#c2c2c2"/>
<path d="M114,54 h26 l3,3 v25 h-29z" fill="#a9a9a9"/><rect x="119" y="54" width="16" height="9" fill="#c3c3c3"/><rect x="129" y="55" width="4" height="7" fill="#9a9a9a"/><rect x="117" y="66" width="14" height="14" fill="#c6c6c6"/><path d="M118,69h12M118,72h12M118,75h12M118,78h12" stroke="#a0a0a0" stroke-width="1"/>
<circle cx="136" cy="73" r="6.5" fill="#b9b9b9" stroke="#a0a0a0" stroke-width="1.5" stroke-dasharray="2.5,1.6"/><circle cx="136" cy="73" r="2.4" fill="#d6d6d6"/>
<path d="M154,57 l13,-3 v28 l-13,-3z" fill="#a3a3a3"/><path d="M167,54 h8 v6 h5 v20 l-13,2z" fill="#b1b1b1"/>
<circle cx="173" cy="71" r="6.5" fill="#bcbcbc" stroke="#a0a0a0" stroke-width="1.5" stroke-dasharray="2.5,1.6"/><circle cx="173" cy="71" r="2.4" fill="#d8d8d8"/>
<path d="M203,53.5 L228.5,67.5 L203,81.5z" fill="#a4a4a4" stroke="#c4c4c4" stroke-width="1"/>
<path d="M247,53 h12 l8,8 v12 l-8,8 h-12 l-8,-8 v-12z" fill="#a6a6a6" stroke="#c6c6c6" stroke-width="1"/>
<text x="253" y="71.2" font-family="Liberation Sans,sans-serif" font-weight="bold" font-size="10.5" fill="#d2d2d2" text-anchor="middle" textLength="23" lengthAdjust="spacingAndGlyphs">STOP</text>
<path d="M291,54 l9,3 v25 l-9,-5z" fill="#a0a0a0"/><path d="M300,57 l10,-3 v23 l-10,5z" fill="#b3b3b3"/><path d="M312,60 l1.5,1.5 l-11,15 l-2,0.5 l0.5,-2z" fill="#8f8f8f"/>
<path d="M341.2,54.4 L353,54 L345.2,65.7 L348.8,65.3 L334.5,82.6 L340.2,68.1 L336.6,68.5Z" fill="#a7a7a7"/>
<rect x="381" y="53.5" width="29" height="21" rx="1.5" fill="#a2a2a2"/><rect x="384" y="56" width="23" height="15" fill="#b4b4b4"/><rect x="392" y="74.5" width="7" height="4" fill="#9a9a9a"/><ellipse cx="395.5" cy="80" rx="9" ry="2.3" fill="#9d9d9d"/>
<path d="M431.2,54.5 h8.8 v22.5 a4.4,4.4 0 0 1 -8.8,0z" fill="url(#tube)" stroke="#6f96d4" stroke-width=".8"/>
<path d="M431.8,73 h7.6 v4 a3.8,3.8 0 0 1 -7.6,0z" fill="#2f4fe0" opacity=".9"/>
<rect x="433.2" y="73" width="2" height="4" fill="#fff" opacity=".35"/>
<path d="M441.6,54.5 h8.8 v22.5 a4.4,4.4 0 0 1 -8.8,0z" fill="url(#tube)" stroke="#6f96d4" stroke-width=".8"/>
<path d="M442.20000000000005,68.7 h7.6 v8.299999999999997 a3.8,3.8 0 0 1 -7.6,0z" fill="#d9292f" opacity=".9"/>
<rect x="443.6" y="68.7" width="2" height="8.299999999999997" fill="#fff" opacity=".35"/>
<path d="M452,54.5 h8.8 v22.5 a4.4,4.4 0 0 1 -8.8,0z" fill="url(#tube)" stroke="#6f96d4" stroke-width=".8"/>
<path d="M452.6,66 h7.6 v11 a3.8,3.8 0 0 1 -7.6,0z" fill="#22c43a" opacity=".9"/>
<rect x="454" y="66" width="2" height="11" fill="#fff" opacity=".35"/>
<rect x="482" y="53.5" width="21" height="29.5" rx="2" fill="#e3e3e3" stroke="#8a8a8a" stroke-width="1"/><rect x="484.5" y="56" width="16" height="6.5" fill="#2c2c2c"/>
<text x="492.5" y="61.5" font-family="Liberation Mono,monospace" font-size="5.5" font-weight="bold" fill="#e8e8e8" text-anchor="middle">1125</text>
<rect x="485" y="65.5" width="2.8" height="2.4" rx=".6" fill="#222"/>
<rect x="489" y="65.5" width="2.8" height="2.4" rx=".6" fill="#222"/>
<rect x="493" y="65.5" width="2.8" height="2.4" rx=".6" fill="#222"/>
<rect x="497" y="65.5" width="2.8" height="2.4" rx=".6" fill="#222"/>
<rect x="485" y="69.7" width="2.8" height="2.4" rx=".6" fill="#222"/>
<rect x="489" y="69.7" width="2.8" height="2.4" rx=".6" fill="#222"/>
<rect x="493" y="69.7" width="2.8" height="2.4" rx=".6" fill="#222"/>
<rect x="497" y="69.7" width="2.8" height="2.4" rx=".6" fill="#222"/>
<rect x="485" y="73.9" width="2.8" height="2.4" rx=".6" fill="#222"/>
<rect x="489" y="73.9" width="2.8" height="2.4" rx=".6" fill="#222"/>
<rect x="493" y="73.9" width="2.8" height="2.4" rx=".6" fill="#222"/>
<rect x="497" y="73.9" width="2.8" height="2.4" rx=".6" fill="#222"/>
<rect x="485" y="78.1" width="2.8" height="2.4" rx=".6" fill="#222"/>
<rect x="489" y="78.1" width="2.8" height="2.4" rx=".6" fill="#222"/>
<rect x="493" y="78.1" width="2.8" height="2.4" rx=".6" fill="#d11"/>
<rect x="497" y="78.1" width="2.8" height="2.4" rx=".6" fill="#d11"/>
<rect x="491" y="63.2" width="2" height="1" fill="#2a2"/><rect x="495" y="63.2" width="4" height="1" fill="#d22"/>
<g transform="translate(543.5,68) rotate(42)"><rect x="-14" y="-9.5" width="14" height="19" rx="3" fill="url(#er1)"/><rect x="-1" y="-9.5" width="15" height="19" rx="3" fill="url(#er2)"/><rect x="-1" y="-9.5" width="4" height="19" fill="#4a7aa2"/></g>
<path d="M9.5,147 l4,-4 l3,5 l4.5,-3" stroke="#d4202a" stroke-width="1.6" fill="none"/><path d="M9.5,148 l5,5.5" stroke="#2aa02a" stroke-width="1.2"/><path d="M14.5,153.5 l6,-3" stroke="#3060c0" stroke-width="1.2"/>
<path d="M71,142 h10 l-4,10 h-10z" fill="#6fa5e6" stroke="#2f62b0" stroke-width="1"/><path d="M67,152 l1,2 h10 l-1,-2" fill="#dfeaf8" stroke="#2f62b0" stroke-width=".8"/>
<rect x="81.5" y="161.5" width="13.5" height="13.5" rx="2.5" fill="url(#redx)" stroke="#b3282c" stroke-width="1"/>
<path d="M85.25,165.25 l6,6 M91.25,165.25 l-6,6" stroke="#fff" stroke-width="2"/>
<rect x="160" y="165" width="13" height="13" rx="2.5" fill="url(#redx)" stroke="#b3282c" stroke-width="1"/>
<path d="M163.5,168.5 l6,6 M169.5,168.5 l-6,6" stroke="#fff" stroke-width="2"/>
<rect x="103.5" y="641.5" width="14" height="14" rx="2.5" fill="url(#redx)" stroke="#b3282c" stroke-width="1"/>
<path d="M107.5,645.5 l6,6 M113.5,645.5 l-6,6" stroke="#fff" stroke-width="2"/>
<rect x="14.5" y="243.5" width="10" height="13.5" fill="#dcdcdc" stroke="#3a4a78" stroke-width="1"/><rect x="16" y="245" width="7" height="3" fill="#2b3a6b"/>
<rect x="16.0" y="249.5" width="1.6" height="1.4" fill="#26346a"/>
<rect x="18.6" y="249.5" width="1.6" height="1.4" fill="#26346a"/>
<rect x="21.2" y="249.5" width="1.6" height="1.4" fill="#26346a"/>
<rect x="16.0" y="251.9" width="1.6" height="1.4" fill="#26346a"/>
<rect x="18.6" y="251.9" width="1.6" height="1.4" fill="#26346a"/>
<rect x="21.2" y="251.9" width="1.6" height="1.4" fill="#26346a"/>
<rect x="16.0" y="254.3" width="1.6" height="1.4" fill="#26346a"/>
<rect x="18.6" y="254.3" width="1.6" height="1.4" fill="#26346a"/>
<rect x="21.2" y="254.3" width="1.6" height="1.4" fill="#26346a"/>
<path d="M25,397.5 v12 M19,403.5 h12" stroke="#1f8f2a" stroke-width="3.2"/><path d="M25,398.5 v10 M20,403.5 h10" stroke="#5ed05e" stroke-width="1.2"/>
<path d="M44,397.5 l12,12 M56,397.5 l-12,12" stroke="#d52b2b" stroke-width="2"/>
<path d="M69,408.5 l1.5,-4 l8.5,-8.5 l2.8,2.8 l-8.5,8.5z" fill="#3f94e6" stroke="#1d4fa8" stroke-width=".8"/><path d="M69,408.5 l1.5,-4 l2.6,2.6z" fill="#f3d9a0"/>
<path d="M111.5,627 l-4,3.5 l4,3.5" stroke="#3b4f82" stroke-width="1.8" fill="none"/>
<path d="M122,627.5v6M124,627.5v6M126,627.5v6M128,627.5v6" stroke="#9db4e8" stroke-width="1"/>
<path d="M929.5,627 l4,3.5 l-4,3.5" stroke="#3b4f82" stroke-width="1.8" fill="none"/>
<path d="M125.5,642 v12.5 h13" stroke="#2a62c8" stroke-width="1.4" fill="none"/><path d="M125.5,654.5 h13" stroke="#2f9e3a" stroke-width="1.4"/><path d="M127,644 l3.5,7 l4,-3 l3.5,-6" stroke="#d8232b" stroke-width="1.5" fill="none"/>
<path d="M145.5,647.5 h6.4 l-3.2,3.4z" fill="#111"/>
<path d="M284.2,647.5 h6.4 l-3.2,3.4z" fill="#111"/>
<path d="M317.1,647.5 h6.4 l-3.2,3.4z" fill="#111"/>
<rect x="158" y="641" width="1" height="16" fill="#c9c3a6"/><rect x="159" y="641" width="1" height="16" fill="#f3f6fb"/>
<rect x="214" y="641" width="1" height="16" fill="#c9c3a6"/><rect x="215" y="641" width="1" height="16" fill="#f3f6fb"/>
<rect x="249.5" y="641" width="1" height="16" fill="#c9c3a6"/><rect x="250.5" y="641" width="1" height="16" fill="#f3f6fb"/>
<rect x="329" y="641" width="1" height="16" fill="#c9c3a6"/><rect x="330" y="641" width="1" height="16" fill="#f3f6fb"/>
<rect x="365" y="641" width="1" height="16" fill="#c9c3a6"/><rect x="366" y="641" width="1" height="16" fill="#f3f6fb"/>
<rect x="421" y="641" width="1" height="16" fill="#c9c3a6"/><rect x="422" y="641" width="1" height="16" fill="#f3f6fb"/>
<ellipse cx="176" cy="649.5" rx="4.5" ry="4" fill="#cfd6e2" stroke="#6b7488" stroke-width="1"/><ellipse cx="183" cy="649.5" rx="4" ry="4" fill="#cfd6e2" stroke="#6b7488" stroke-width="1"/><rect x="176.5" y="642.5" width="5.5" height="4" fill="#222"/><circle cx="178" cy="649.5" r="2.8" fill="#4f9bea" stroke="#1e5fb3" stroke-width=".8"/><path d="M180,652 l3,3" stroke="#e08a28" stroke-width="1.8"/>
<path d="M193.5,642.5 h13 l1.8,1.8 v12 h-14.8z" fill="url(#flp)" stroke="#1f4a9c" stroke-width=".8"/><rect x="196.5" y="643" width="8" height="4.5" fill="#e8eef8"/><rect x="201.5" y="643.5" width="2" height="3.3" fill="#2a5cb8"/><rect x="196" y="650.5" width="9.5" height="5.5" fill="#dfe6f2"/><path d="M197,652.3h7.5M197,654.2h7.5" stroke="#8fa2c4" stroke-width=".8"/>
<rect x="229.5" y="642" width="12" height="2" fill="#0a1d9a"/><rect x="229.5" y="654" width="12" height="2" fill="#0a1d9a"/><path d="M235.5,645 v8" stroke="#e0141c" stroke-width="1.6"/><path d="M232.8,647.3 l2.7,-2.8 l2.7,2.8z M232.8,650.7 l2.7,2.8 l2.7,-2.8z" fill="#e0141c"/>
<rect x="264.5" y="642" width="10.5" height="13" fill="#f4f8ff" stroke="#3f79d0" stroke-width="1"/><path d="M267,645h1.5M269.5,645h4M267,648h1.5M269.5,648h4M267,651h1.5M269.5,651h4" stroke="#2f5fb0" stroke-width="1.1"/>
<rect x="296.5" y="646" width="12.5" height="9.5" fill="#e2544f" stroke="#a81e1e" stroke-width="1"/><rect x="298.5" y="648" width="8.5" height="5.5" fill="#f08a84"/><path d="M302.7,641.5 v4 M300.5,643.5 h4.4" stroke="#333" stroke-width="1.2"/>
<circle cx="348.5" cy="646.5" r="4.6" fill="#a9d2fb" stroke="#3b7fd6" stroke-width="1.5"/><path d="M352,650.5 l4.5,5" stroke="#e59030" stroke-width="2.4"/><path d="M346,645 a3,3 0 0 1 3,-2" stroke="#fff" stroke-width="1" fill="none"/>
<rect x="381.5" y="645" width="9" height="8.5" fill="none" stroke="#1e4fd0" stroke-width="1.3"/>
<rect x="378.5" y="642" width="3" height="3" fill="#000"/>
<rect x="385" y="642" width="3" height="3" fill="#000"/>
<rect x="390.5" y="648.2" width="3" height="3" fill="#000"/>
<rect x="378.5" y="648.2" width="3" height="3" fill="#000"/>
<rect x="385" y="654.5" width="3" height="3" fill="#000"/>
<rect x="378.5" y="654.5" width="3" height="3" fill="#000"/>
<rect x="390.5" y="654.5" width="3" height="3" fill="#000"/>
<rect x="401.5" y="641.5" width="11" height="14.5" rx="1" fill="#bdbdbd" stroke="#555" stroke-width="1"/><rect x="403.3" y="643.3" width="7.4" height="3" fill="#444"/>
<rect x="403.4" y="647.8" width="1.8" height="1.5" fill="#333"/>
<rect x="406.09999999999997" y="647.8" width="1.8" height="1.5" fill="#333"/>
<rect x="408.79999999999995" y="647.8" width="1.8" height="1.5" fill="#333"/>
<rect x="403.4" y="650.3" width="1.8" height="1.5" fill="#333"/>
<rect x="406.09999999999997" y="650.3" width="1.8" height="1.5" fill="#333"/>
<rect x="408.79999999999995" y="650.3" width="1.8" height="1.5" fill="#333"/>
<rect x="403.4" y="652.8" width="1.8" height="1.5" fill="#333"/>
<rect x="406.09999999999997" y="652.8" width="1.8" height="1.5" fill="#333"/>
<rect x="408.79999999999995" y="652.8" width="1.8" height="1.5" fill="#d22"/>
<path d="M434.5,642.5 h14 l-5.3,6.5 v6.5 l-3.4,-1.8 v-4.7z" fill="#3f86d8" stroke="#1f5cab" stroke-width=".8"/><ellipse cx="441.5" cy="643" rx="7" ry="1.4" fill="#8fc0f2"/>
<g fill="none" stroke="#8c8c8c" stroke-width="1.8"><rect x="455" y="643.5" width="9" height="5" rx="2.5" transform="rotate(40 459.5 646)"/><rect x="461" y="649.5" width="9" height="5" rx="2.5" transform="rotate(40 465.5 652)"/></g>
<path d="M477.5,646.6 h3.5 q1.2,-1.6 3.2,-1.2 h6.5 q1.6,.1 1.6,1.4 q0,1.3 -1.6,1.4 h-3.6 q.9,1 0,2 q.7,1 -.3,1.8 q.4,1.2 -1.1,1.6 h-4.4 q-1.9,0 -2.8,-1.4 h-1z" fill="#eaa562" stroke="#b0672a" stroke-width=".8" stroke-linejoin="round"/><path d="M485,648.2 h3.5 M484.6,650.2 h2.6 M484.3,652 h2.2" stroke="#b0672a" stroke-width=".7"/>
<rect x="499.5" y="642" width="10.5" height="13.5" fill="#f3f8ff" stroke="#4b86d8" stroke-width="1"/><rect x="499.5" y="642" width="10.5" height="2.5" fill="#9cc0ee"/><path d="M502,647h5M502,649.5h5M502,652h4" stroke="#9ab0cc" stroke-width=".8"/><path d="M511.5,642.5 l1.2,.8 l-4.5,10.5 l-1.6,1.2 l.3,-2z" fill="#e0a030" stroke="#9a6414" stroke-width=".5"/>
</svg>
</body></html>
